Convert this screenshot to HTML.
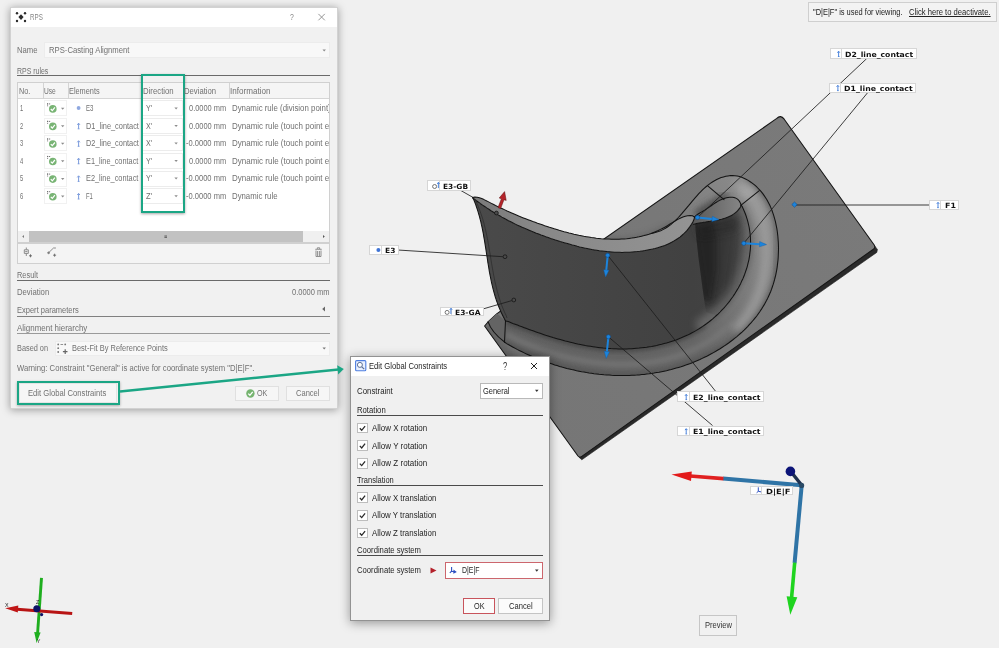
<!DOCTYPE html><html><head><meta charset="utf-8"><title>RPS</title><style>html,body{margin:0;padding:0;}body{width:999px;height:648px;position:relative;overflow:hidden;background:#f0f0f0;font-family:'Liberation Sans', sans-serif;}svg{position:absolute;left:0;top:0;}</style></head><body>
<svg width="999" height="648" viewBox="0 0 999 648">
<defs>
<linearGradient id="gwall" gradientUnits="userSpaceOnUse" x1="472" y1="0" x2="754" y2="0">
<stop offset="0" stop-color="#4a4a4a"/><stop offset="0.5" stop-color="#444"/><stop offset="0.78" stop-color="#414141"/><stop offset="0.9" stop-color="#434343"/><stop offset="1" stop-color="#505050"/>
</linearGradient>
<linearGradient id="gring" gradientUnits="userSpaceOnUse" x1="560" y1="390" x2="770" y2="190">
<stop offset="0" stop-color="#626262"/><stop offset="0.45" stop-color="#666"/><stop offset="0.7" stop-color="#7c7c7c"/><stop offset="1" stop-color="#8c8c8c"/>
</linearGradient>
<linearGradient id="gplate" gradientUnits="userSpaceOnUse" x1="500" y1="400" x2="860" y2="180">
<stop offset="0" stop-color="#767676"/><stop offset="0.3" stop-color="#777"/><stop offset="1" stop-color="#7a7a7a"/>
</linearGradient>
<linearGradient id="grim" gradientUnits="userSpaceOnUse" x1="472" y1="0" x2="695" y2="0">
<stop offset="0" stop-color="#7a7a7a"/><stop offset="0.3" stop-color="#888"/><stop offset="1" stop-color="#939393"/>
</linearGradient>
<linearGradient id="gtongue" gradientUnits="userSpaceOnUse" x1="694" y1="0" x2="741" y2="0">
<stop offset="0" stop-color="#5a5a5a"/><stop offset="1" stop-color="#858585"/>
</linearGradient>
<filter id="b2" x="-20%" y="-20%" width="140%" height="140%"><feGaussianBlur stdDeviation="2.2"/></filter>
<filter id="b3" x="-20%" y="-20%" width="140%" height="140%"><feGaussianBlur stdDeviation="3"/></filter>
<filter id="b4" x="-20%" y="-20%" width="140%" height="140%"><feGaussianBlur stdDeviation="4.5"/></filter>
<filter id="b8" x="-30%" y="-30%" width="160%" height="160%"><feGaussianBlur stdDeviation="8"/></filter>
<clipPath id="cring"><path d="M504.5 342.0 L506.6 343.6 L508.7 344.8 L510.9 346.0 L513.1 347.2 L515.3 348.4 L517.5 349.6 L519.7 350.7 L522.0 351.8 L524.2 352.9 L526.5 354.0 L528.8 355.0 L531.1 356.0 L533.4 357.0 L535.7 358.0 L538.0 358.9 L540.4 359.9 L542.7 360.8 L545.1 361.6 L547.5 362.5 L549.9 363.3 L552.3 364.1 L554.7 364.9 L557.1 365.6 L559.5 366.4 L561.9 367.1 L564.3 367.7 L566.8 368.4 L569.2 369.0 L571.7 369.6 L574.1 370.1 L576.6 370.7 L579.1 371.2 L581.6 371.7 L584.0 372.1 L586.5 372.6 L589.0 373.0 L591.5 373.3 L594.0 373.7 L596.5 374.0 L599.0 374.3 L601.5 374.5 L604.0 374.8 L606.6 375.0 L609.1 375.1 L611.6 375.3 L614.1 375.4 L616.6 375.5 L619.1 375.5 L621.6 375.6 L624.1 375.5 L626.7 375.5 L629.2 375.4 L631.7 375.3 L634.2 375.2 L636.7 375.1 L639.2 374.9 L641.7 374.6 L644.2 374.4 L646.7 374.1 L649.2 373.8 L651.7 373.4 L654.1 373.1 L656.6 372.6 L659.1 372.2 L661.6 371.7 L664.0 371.2 L666.5 370.7 L668.9 370.1 L671.3 369.5 L673.8 368.8 L676.2 368.1 L678.6 367.4 L681.0 366.7 L683.4 365.9 L685.8 365.1 L688.2 364.2 L690.5 363.4 L692.9 362.4 L695.2 361.5 L697.6 360.5 L699.9 359.5 L702.2 358.4 L704.5 357.3 L706.8 356.2 L709.1 355.0 L711.3 353.8 L713.5 352.6 L715.8 351.3 L717.9 350.0 L720.1 348.7 L722.3 347.3 L724.4 345.9 L726.5 344.5 L728.6 343.0 L730.6 341.5 L732.6 340.0 L734.6 338.4 L736.6 336.8 L738.5 335.2 L740.4 333.5 L742.3 331.8 L744.1 330.1 L745.9 328.3 L747.6 326.6 L749.3 324.7 L751.0 322.9 L752.6 321.0 L754.2 319.1 L755.8 317.2 L757.3 315.2 L758.7 313.2 L760.1 311.2 L761.5 309.1 L762.8 307.0 L764.1 304.9 L765.3 302.8 L766.5 300.6 L767.6 298.4 L768.6 296.2 L769.6 294.0 L770.6 291.7 L771.5 289.4 L772.3 287.0 L773.1 284.7 L773.8 282.3 L774.5 279.9 L775.1 277.5 L775.7 275.1 L776.2 272.6 L776.7 270.1 L777.1 267.6 L777.4 265.1 L777.7 262.6 L778.0 260.1 L778.2 257.5 L778.3 255.0 L778.4 252.4 L778.5 249.8 L778.5 247.2 L778.4 244.6 L778.3 242.0 L778.1 239.4 L777.9 236.7 L777.6 234.1 L777.3 231.5 L776.9 228.9 L776.4 226.3 L775.9 223.8 L775.3 221.2 L774.6 218.7 L773.9 216.2 L773.1 213.7 L772.3 211.3 L771.4 208.9 L770.4 206.6 L769.3 204.3 L768.1 202.0 L766.9 199.8 L765.6 197.7 L764.2 195.6 L762.8 193.6 L761.2 191.6 L759.6 189.8 L757.8 188.0 L756.0 186.2 L754.2 184.6 L752.2 183.1 L750.2 181.7 L748.2 180.4 L746.0 179.2 L743.9 178.2 L741.7 177.3 L739.5 176.6 L737.2 176.1 L734.9 175.8 L732.6 175.6 L730.3 175.6 L728.0 175.9 L725.8 176.3 L723.5 176.9 L721.2 177.6 L718.9 178.5 L716.7 179.5 L714.5 180.7 L712.4 182.0 L710.3 183.4 L708.3 184.9 L706.3 186.5 L704.4 188.2 L702.5 189.9 L700.6 191.8 L698.8 193.7 L697.1 195.6 L695.3 197.6 L693.6 199.6 L691.9 201.6 L690.3 203.6 L688.6 205.7 L686.9 207.7 L685.2 209.7 L683.5 211.7 L681.8 213.7 L680.1 215.6 L678.4 217.5 L676.6 219.3 L674.8 221.1 L672.9 222.7 L671.1 224.3 L669.1 225.8 L667.1 227.2 L665.0 228.5 L662.9 229.6 L660.7 230.7 L658.4 231.6 L656.1 232.3 L653.6 232.9 L651.0 233.5 L651.3 233.4 L653.6 232.5 L656.0 231.5 L658.3 230.5 L660.6 229.4 L662.9 228.2 L665.2 227.0 L667.4 225.7 L669.6 224.3 L671.8 222.9 L674.0 221.6 L676.2 220.3 L678.4 219.1 L680.7 218.0 L682.9 217.1 L685.3 216.3 L687.6 215.8 L690.1 215.6 L692.5 215.8 L694.5 217.1 L694.5 217.1 L695.6 215.9 L696.8 214.9 L698.1 214.0 L699.4 213.2 L700.7 212.4 L702.1 211.7 L703.4 210.9 L704.7 210.1 L706.0 209.2 L707.3 208.4 L708.6 207.5 L709.9 206.6 L711.2 205.7 L712.5 204.8 L713.8 203.9 L715.1 203.0 L716.4 202.2 L717.8 201.4 L719.1 200.6 L720.5 199.9 L722.0 199.3 L723.4 198.7 L724.9 198.2 L726.5 197.7 L728.0 197.4 L729.6 197.2 L731.1 197.2 L732.6 197.3 L734.0 197.5 L735.4 197.9 L736.7 198.6 L737.8 199.4 L738.9 200.5 L739.8 201.9 L740.6 203.5 L741.1 205.2 L741.1 205.2 L742.3 206.7 L743.4 209.2 L744.5 211.7 L745.5 214.3 L746.4 216.8 L747.2 219.3 L747.9 221.9 L748.5 224.5 L749.1 227.0 L749.5 229.6 L749.9 232.1 L750.2 234.7 L750.4 237.2 L750.5 239.7 L750.6 242.3 L750.6 244.8 L750.5 247.3 L750.3 249.8 L750.0 252.3 L749.7 254.8 L749.3 257.3 L748.9 259.8 L748.3 262.2 L747.7 264.6 L747.1 267.1 L746.3 269.5 L745.5 271.8 L744.7 274.2 L743.8 276.5 L742.8 278.9 L741.7 281.1 L740.7 283.4 L739.5 285.7 L738.3 287.9 L737.0 290.1 L735.7 292.2 L734.4 294.4 L733.0 296.5 L731.5 298.5 L730.0 300.6 L728.5 302.6 L726.9 304.5 L725.2 306.5 L723.6 308.4 L721.8 310.2 L720.1 312.0 L718.3 313.8 L716.4 315.5 L714.6 317.2 L712.7 318.9 L710.7 320.5 L708.8 322.0 L706.8 323.5 L704.7 325.0 L702.7 326.4 L700.6 327.8 L698.5 329.1 L696.4 330.4 L694.2 331.6 L692.0 332.8 L689.8 334.0 L687.6 335.1 L685.3 336.1 L683.0 337.1 L680.7 338.1 L678.4 339.0 L676.1 339.9 L673.7 340.7 L671.3 341.5 L668.9 342.3 L666.5 343.0 L664.1 343.6 L661.6 344.3 L659.2 344.8 L656.7 345.4 L654.2 345.9 L651.7 346.4 L649.2 346.8 L646.7 347.2 L644.2 347.5 L641.7 347.8 L639.1 348.1 L636.6 348.3 L634.0 348.5 L631.5 348.7 L628.9 348.8 L626.4 348.9 L623.8 348.9 L621.2 348.9 L618.6 348.9 L616.1 348.8 L613.5 348.7 L610.9 348.6 L608.3 348.4 L605.8 348.2 L603.2 348.0 L600.6 347.7 L598.1 347.4 L595.5 347.1 L593.0 346.7 L590.4 346.3 L587.9 345.9 L585.4 345.5 L582.8 345.0 L580.3 344.5 L577.8 344.0 L575.3 343.4 L572.8 342.8 L570.3 342.2 L567.8 341.6 L565.3 341.0 L562.8 340.3 L560.3 339.6 L557.9 338.9 L555.4 338.2 L553.0 337.5 L550.5 336.7 L548.1 335.9 L545.7 335.2 L543.3 334.4 L540.9 333.6 L538.5 332.8 L536.1 331.9 L533.7 331.1 L531.4 330.3 L529.0 329.4 L526.7 328.6 L524.3 327.7 L522.0 326.8 L519.7 326.0 L517.4 325.1 L515.1 324.2 L512.8 323.4 L510.6 322.5 L508.3 321.6 L505.5 321.0 Z"/></clipPath>
<clipPath id="cwall"><path d="M472.5 197.5 L472.5 197.5 L474.4 199.2 L476.4 200.7 L478.5 202.2 L480.5 203.7 L482.6 205.1 L484.7 206.5 L486.7 207.9 L488.9 209.3 L491.0 210.7 L493.1 212.0 L495.3 213.3 L497.5 214.6 L499.7 215.8 L501.9 217.1 L504.1 218.3 L506.3 219.5 L508.5 220.7 L510.8 221.8 L513.1 223.0 L515.3 224.1 L517.6 225.2 L519.9 226.2 L522.2 227.3 L524.6 228.3 L526.9 229.3 L529.2 230.3 L531.6 231.3 L533.9 232.2 L536.3 233.2 L538.7 234.1 L541.0 235.0 L543.4 235.8 L545.8 236.7 L548.2 237.5 L550.6 238.4 L553.0 239.2 L555.4 240.0 L557.8 240.7 L560.2 241.5 L562.6 242.2 L565.1 242.9 L567.5 243.6 L569.9 244.3 L572.3 245.0 L574.7 245.6 L577.2 246.3 L579.6 246.9 L582.1 247.4 L584.5 248.0 L587.0 248.5 L589.4 249.0 L591.9 249.5 L594.3 249.9 L596.8 250.3 L599.3 250.7 L601.8 251.0 L604.3 251.3 L606.8 251.6 L609.3 251.8 L611.9 252.0 L614.4 252.2 L616.9 252.3 L619.5 252.3 L622.0 252.4 L624.6 252.3 L627.2 252.3 L629.7 252.2 L632.3 252.0 L634.8 251.8 L637.4 251.6 L639.9 251.3 L642.5 250.9 L645.0 250.6 L647.6 250.1 L650.1 249.6 L652.6 249.1 L655.1 248.5 L657.6 247.8 L660.0 247.0 L662.4 246.2 L664.8 245.4 L667.1 244.4 L669.3 243.4 L671.6 242.3 L673.7 241.1 L675.9 239.8 L677.9 238.5 L679.9 237.1 L681.8 235.5 L683.6 233.9 L685.4 232.2 L687.1 230.3 L688.6 228.4 L690.1 226.4 L691.5 224.2 L692.8 222.0 L694.0 219.6 L694.5 217.1 L693.5 224.3 L695.0 223.9 L696.4 223.6 L697.9 223.3 L699.4 223.0 L700.9 222.7 L702.4 222.5 L704.0 222.2 L705.6 222.0 L707.2 221.7 L708.8 221.5 L710.4 221.3 L712.1 221.0 L713.7 220.8 L715.3 220.5 L716.9 220.2 L718.5 219.9 L720.1 219.5 L721.6 219.2 L723.2 218.7 L724.7 218.3 L726.2 217.8 L727.6 217.2 L729.1 216.6 L730.4 216.0 L731.8 215.2 L733.1 214.4 L734.3 213.6 L735.5 212.7 L736.7 211.6 L737.7 210.6 L738.7 209.4 L739.7 208.1 L740.6 206.7 L741.1 205.2 L741.1 205.2 L742.3 206.7 L743.4 209.2 L744.5 211.7 L745.5 214.3 L746.4 216.8 L747.2 219.3 L747.9 221.9 L748.5 224.5 L749.1 227.0 L749.5 229.6 L749.9 232.1 L750.2 234.7 L750.4 237.2 L750.5 239.7 L750.6 242.3 L750.6 244.8 L750.5 247.3 L750.3 249.8 L750.0 252.3 L749.7 254.8 L749.3 257.3 L748.9 259.8 L748.3 262.2 L747.7 264.6 L747.1 267.1 L746.3 269.5 L745.5 271.8 L744.7 274.2 L743.8 276.5 L742.8 278.9 L741.7 281.1 L740.7 283.4 L739.5 285.7 L738.3 287.9 L737.0 290.1 L735.7 292.2 L734.4 294.4 L733.0 296.5 L731.5 298.5 L730.0 300.6 L728.5 302.6 L726.9 304.5 L725.2 306.5 L723.6 308.4 L721.8 310.2 L720.1 312.0 L718.3 313.8 L716.4 315.5 L714.6 317.2 L712.7 318.9 L710.7 320.5 L708.8 322.0 L706.8 323.5 L704.7 325.0 L702.7 326.4 L700.6 327.8 L698.5 329.1 L696.4 330.4 L694.2 331.6 L692.0 332.8 L689.8 334.0 L687.6 335.1 L685.3 336.1 L683.0 337.1 L680.7 338.1 L678.4 339.0 L676.1 339.9 L673.7 340.7 L671.3 341.5 L668.9 342.3 L666.5 343.0 L664.1 343.6 L661.6 344.3 L659.2 344.8 L656.7 345.4 L654.2 345.9 L651.7 346.4 L649.2 346.8 L646.7 347.2 L644.2 347.5 L641.7 347.8 L639.1 348.1 L636.6 348.3 L634.0 348.5 L631.5 348.7 L628.9 348.8 L626.4 348.9 L623.8 348.9 L621.2 348.9 L618.6 348.9 L616.1 348.8 L613.5 348.7 L610.9 348.6 L608.3 348.4 L605.8 348.2 L603.2 348.0 L600.6 347.7 L598.1 347.4 L595.5 347.1 L593.0 346.7 L590.4 346.3 L587.9 345.9 L585.4 345.5 L582.8 345.0 L580.3 344.5 L577.8 344.0 L575.3 343.4 L572.8 342.8 L570.3 342.2 L567.8 341.6 L565.3 341.0 L562.8 340.3 L560.3 339.6 L557.9 338.9 L555.4 338.2 L553.0 337.5 L550.5 336.7 L548.1 335.9 L545.7 335.2 L543.3 334.4 L540.9 333.6 L538.5 332.8 L536.1 331.9 L533.7 331.1 L531.4 330.3 L529.0 329.4 L526.7 328.6 L524.3 327.7 L522.0 326.8 L519.7 326.0 L517.4 325.1 L515.1 324.2 L512.8 323.4 L510.6 322.5 L508.3 321.6 L505.5 321.0 L505.5 321.0 L504.4 318.7 L503.2 316.4 L502.0 314.1 L500.9 311.7 L499.9 309.4 L498.9 307.0 L497.9 304.6 L497.1 302.2 L496.2 299.7 L495.4 297.3 L494.7 294.9 L494.0 292.4 L493.3 289.9 L492.7 287.5 L492.1 285.0 L491.5 282.5 L491.0 280.0 L490.5 277.4 L490.0 274.9 L489.5 272.4 L489.1 269.8 L488.7 267.3 L488.3 264.8 L487.8 262.2 L487.5 259.7 L487.1 257.1 L486.7 254.6 L486.3 252.0 L485.9 249.5 L485.5 246.9 L485.1 244.4 L484.7 241.8 L484.3 239.3 L483.8 236.8 L483.4 234.2 L482.9 231.7 L482.4 229.2 L481.9 226.7 L481.3 224.2 L480.8 221.7 L480.1 219.2 L479.5 216.7 L478.8 214.3 L478.1 211.8 L477.3 209.4 L476.5 207.0 L475.7 204.5 L474.8 202.2 L473.8 199.8 L472.5 197.5 Z"/></clipPath>
<clipPath id="ccrease"><path d="M694.5 215 Q696 240 699.5 265 Q702 285 706 312 L760 330 L760 200 Z"/></clipPath>
<clipPath id="cplate"><path d="M776.8 118.4 Q780.6 114.4 784.2 119.2 L874.2 245 Q875.8 247.6 873.4 249.2 L581.5 456.6 Q579.6 458 578 456 L484.6 326 L488 322 L497 313.6 Z"/></clipPath>
</defs>
<path d="M874 245 L877.4 249.4 L876.8 252.4 L581.8 459.8 L579 457.2 Z" fill="#2a2a2a" stroke="#1f1f1f" stroke-width="0.6" stroke-linejoin="round"/>
<path d="M776.8 118.4 Q780.6 114.4 784.2 119.2 L874.2 245 Q875.8 247.6 873.4 249.2 L581.5 456.6 Q579.6 458 578 456 L484.6 326 L488 322 L497 313.6 Z" fill="url(#gplate)"/>
<g clip-path="url(#cplate)">
<path d="M485 326 L522 377" stroke="#4e4e4e" stroke-width="14" opacity="0.5" filter="url(#b4)"/>
<path d="M607.0 242.0 L622.0 242.5 L637.0 241.0 L651.0 237.0 L665.0 230.5 L676.0 224.0" fill="none" stroke="#555" stroke-width="9" opacity="0.5" filter="url(#b3)"/>
</g>
<path d="M776.8 118.4 Q780.6 114.4 784.2 119.2 L874.2 245 Q875.8 247.6 873.4 249.2 L581.5 456.6 Q579.6 458 578 456 L484.6 326 L488 322 L497 313.6 Z" fill="none" stroke="#161616" stroke-width="1.1" stroke-linejoin="round"/>
<path d="M488.1 321.8 Q491.5 332 504.5 342 L505.5 321 L497 313.6 Z" fill="#646464"/>
<path d="M504.5 342.0 L506.6 343.6 L508.7 344.8 L510.9 346.0 L513.1 347.2 L515.3 348.4 L517.5 349.6 L519.7 350.7 L522.0 351.8 L524.2 352.9 L526.5 354.0 L528.8 355.0 L531.1 356.0 L533.4 357.0 L535.7 358.0 L538.0 358.9 L540.4 359.9 L542.7 360.8 L545.1 361.6 L547.5 362.5 L549.9 363.3 L552.3 364.1 L554.7 364.9 L557.1 365.6 L559.5 366.4 L561.9 367.1 L564.3 367.7 L566.8 368.4 L569.2 369.0 L571.7 369.6 L574.1 370.1 L576.6 370.7 L579.1 371.2 L581.6 371.7 L584.0 372.1 L586.5 372.6 L589.0 373.0 L591.5 373.3 L594.0 373.7 L596.5 374.0 L599.0 374.3 L601.5 374.5 L604.0 374.8 L606.6 375.0 L609.1 375.1 L611.6 375.3 L614.1 375.4 L616.6 375.5 L619.1 375.5 L621.6 375.6 L624.1 375.5 L626.7 375.5 L629.2 375.4 L631.7 375.3 L634.2 375.2 L636.7 375.1 L639.2 374.9 L641.7 374.6 L644.2 374.4 L646.7 374.1 L649.2 373.8 L651.7 373.4 L654.1 373.1 L656.6 372.6 L659.1 372.2 L661.6 371.7 L664.0 371.2 L666.5 370.7 L668.9 370.1 L671.3 369.5 L673.8 368.8 L676.2 368.1 L678.6 367.4 L681.0 366.7 L683.4 365.9 L685.8 365.1 L688.2 364.2 L690.5 363.4 L692.9 362.4 L695.2 361.5 L697.6 360.5 L699.9 359.5 L702.2 358.4 L704.5 357.3 L706.8 356.2 L709.1 355.0 L711.3 353.8 L713.5 352.6 L715.8 351.3 L717.9 350.0 L720.1 348.7 L722.3 347.3 L724.4 345.9 L726.5 344.5 L728.6 343.0 L730.6 341.5 L732.6 340.0 L734.6 338.4 L736.6 336.8 L738.5 335.2 L740.4 333.5 L742.3 331.8 L744.1 330.1 L745.9 328.3 L747.6 326.6 L749.3 324.7 L751.0 322.9 L752.6 321.0 L754.2 319.1 L755.8 317.2 L757.3 315.2 L758.7 313.2 L760.1 311.2 L761.5 309.1 L762.8 307.0 L764.1 304.9 L765.3 302.8 L766.5 300.6 L767.6 298.4 L768.6 296.2 L769.6 294.0 L770.6 291.7 L771.5 289.4 L772.3 287.0 L773.1 284.7 L773.8 282.3 L774.5 279.9 L775.1 277.5 L775.7 275.1 L776.2 272.6 L776.7 270.1 L777.1 267.6 L777.4 265.1 L777.7 262.6 L778.0 260.1 L778.2 257.5 L778.3 255.0 L778.4 252.4 L778.5 249.8 L778.5 247.2 L778.4 244.6 L778.3 242.0 L778.1 239.4 L777.9 236.7 L777.6 234.1 L777.3 231.5 L776.9 228.9 L776.4 226.3 L775.9 223.8 L775.3 221.2 L774.6 218.7 L773.9 216.2 L773.1 213.7 L772.3 211.3 L771.4 208.9 L770.4 206.6 L769.3 204.3 L768.1 202.0 L766.9 199.8 L765.6 197.7 L764.2 195.6 L762.8 193.6 L761.2 191.6 L759.6 189.8 L757.8 188.0 L756.0 186.2 L754.2 184.6 L752.2 183.1 L750.2 181.7 L748.2 180.4 L746.0 179.2 L743.9 178.2 L741.7 177.3 L739.5 176.6 L737.2 176.1 L734.9 175.8 L732.6 175.6 L730.3 175.6 L728.0 175.9 L725.8 176.3 L723.5 176.9 L721.2 177.6 L718.9 178.5 L716.7 179.5 L714.5 180.7 L712.4 182.0 L710.3 183.4 L708.3 184.9 L706.3 186.5 L704.4 188.2 L702.5 189.9 L700.6 191.8 L698.8 193.7 L697.1 195.6 L695.3 197.6 L693.6 199.6 L691.9 201.6 L690.3 203.6 L688.6 205.7 L686.9 207.7 L685.2 209.7 L683.5 211.7 L681.8 213.7 L680.1 215.6 L678.4 217.5 L676.6 219.3 L674.8 221.1 L672.9 222.7 L671.1 224.3 L669.1 225.8 L667.1 227.2 L665.0 228.5 L662.9 229.6 L660.7 230.7 L658.4 231.6 L656.1 232.3 L653.6 232.9 L651.0 233.5 L651.3 233.4 L653.6 232.5 L656.0 231.5 L658.3 230.5 L660.6 229.4 L662.9 228.2 L665.2 227.0 L667.4 225.7 L669.6 224.3 L671.8 222.9 L674.0 221.6 L676.2 220.3 L678.4 219.1 L680.7 218.0 L682.9 217.1 L685.3 216.3 L687.6 215.8 L690.1 215.6 L692.5 215.8 L694.5 217.1 L694.5 217.1 L695.6 215.9 L696.8 214.9 L698.1 214.0 L699.4 213.2 L700.7 212.4 L702.1 211.7 L703.4 210.9 L704.7 210.1 L706.0 209.2 L707.3 208.4 L708.6 207.5 L709.9 206.6 L711.2 205.7 L712.5 204.8 L713.8 203.9 L715.1 203.0 L716.4 202.2 L717.8 201.4 L719.1 200.6 L720.5 199.9 L722.0 199.3 L723.4 198.7 L724.9 198.2 L726.5 197.7 L728.0 197.4 L729.6 197.2 L731.1 197.2 L732.6 197.3 L734.0 197.5 L735.4 197.9 L736.7 198.6 L737.8 199.4 L738.9 200.5 L739.8 201.9 L740.6 203.5 L741.1 205.2 L741.1 205.2 L742.3 206.7 L743.4 209.2 L744.5 211.7 L745.5 214.3 L746.4 216.8 L747.2 219.3 L747.9 221.9 L748.5 224.5 L749.1 227.0 L749.5 229.6 L749.9 232.1 L750.2 234.7 L750.4 237.2 L750.5 239.7 L750.6 242.3 L750.6 244.8 L750.5 247.3 L750.3 249.8 L750.0 252.3 L749.7 254.8 L749.3 257.3 L748.9 259.8 L748.3 262.2 L747.7 264.6 L747.1 267.1 L746.3 269.5 L745.5 271.8 L744.7 274.2 L743.8 276.5 L742.8 278.9 L741.7 281.1 L740.7 283.4 L739.5 285.7 L738.3 287.9 L737.0 290.1 L735.7 292.2 L734.4 294.4 L733.0 296.5 L731.5 298.5 L730.0 300.6 L728.5 302.6 L726.9 304.5 L725.2 306.5 L723.6 308.4 L721.8 310.2 L720.1 312.0 L718.3 313.8 L716.4 315.5 L714.6 317.2 L712.7 318.9 L710.7 320.5 L708.8 322.0 L706.8 323.5 L704.7 325.0 L702.7 326.4 L700.6 327.8 L698.5 329.1 L696.4 330.4 L694.2 331.6 L692.0 332.8 L689.8 334.0 L687.6 335.1 L685.3 336.1 L683.0 337.1 L680.7 338.1 L678.4 339.0 L676.1 339.9 L673.7 340.7 L671.3 341.5 L668.9 342.3 L666.5 343.0 L664.1 343.6 L661.6 344.3 L659.2 344.8 L656.7 345.4 L654.2 345.9 L651.7 346.4 L649.2 346.8 L646.7 347.2 L644.2 347.5 L641.7 347.8 L639.1 348.1 L636.6 348.3 L634.0 348.5 L631.5 348.7 L628.9 348.8 L626.4 348.9 L623.8 348.9 L621.2 348.9 L618.6 348.9 L616.1 348.8 L613.5 348.7 L610.9 348.6 L608.3 348.4 L605.8 348.2 L603.2 348.0 L600.6 347.7 L598.1 347.4 L595.5 347.1 L593.0 346.7 L590.4 346.3 L587.9 345.9 L585.4 345.5 L582.8 345.0 L580.3 344.5 L577.8 344.0 L575.3 343.4 L572.8 342.8 L570.3 342.2 L567.8 341.6 L565.3 341.0 L562.8 340.3 L560.3 339.6 L557.9 338.9 L555.4 338.2 L553.0 337.5 L550.5 336.7 L548.1 335.9 L545.7 335.2 L543.3 334.4 L540.9 333.6 L538.5 332.8 L536.1 331.9 L533.7 331.1 L531.4 330.3 L529.0 329.4 L526.7 328.6 L524.3 327.7 L522.0 326.8 L519.7 326.0 L517.4 325.1 L515.1 324.2 L512.8 323.4 L510.6 322.5 L508.3 321.6 L505.5 321.0 Z" fill="url(#gring)"/>
<g clip-path="url(#cring)">
<path d="M505.5 321.0 L508.3 321.6 L510.6 322.5 L512.8 323.4 L515.1 324.2 L517.4 325.1 L519.7 326.0 L522.0 326.8 L524.3 327.7 L526.7 328.6 L529.0 329.4 L531.4 330.3 L533.7 331.1 L536.1 331.9 L538.5 332.8 L540.9 333.6 L543.3 334.4 L545.7 335.2 L548.1 335.9 L550.5 336.7 L553.0 337.5 L555.4 338.2 L557.9 338.9 L560.3 339.6 L562.8 340.3 L565.3 341.0 L567.8 341.6 L570.3 342.2 L572.8 342.8 L575.3 343.4 L577.8 344.0 L580.3 344.5 L582.8 345.0 L585.4 345.5 L587.9 345.9 L590.4 346.3 L593.0 346.7 L595.5 347.1 L598.1 347.4 L600.6 347.7 L603.2 348.0 L605.8 348.2 L608.3 348.4 L610.9 348.6 L613.5 348.7 L616.1 348.8 L618.6 348.9 L621.2 348.9 L623.8 348.9 L626.4 348.9 L628.9 348.8 L631.5 348.7 L634.0 348.5 L636.6 348.3 L639.1 348.1 L641.7 347.8 L644.2 347.5 L646.7 347.2 L649.2 346.8 L651.7 346.4 L654.2 345.9 L656.7 345.4 L659.2 344.8 L661.6 344.3 L664.1 343.6 L666.5 343.0 L668.9 342.3 L671.3 341.5 L673.7 340.7 L676.1 339.9 L678.4 339.0 L680.7 338.1 L683.0 337.1 L685.3 336.1 L687.6 335.1 L689.8 334.0 L692.0 332.8 L694.2 331.6 L696.4 330.4 L698.5 329.1 L700.6 327.8 L702.7 326.4 L704.7 325.0" fill="none" stroke="#3c3c3c" stroke-width="6" opacity="0.7" filter="url(#b2)"/>
<path d="M704.7 325.0 L706.8 323.5 L708.8 322.0 L710.7 320.5 L712.7 318.9 L714.6 317.2 L716.4 315.5 L718.3 313.8 L720.1 312.0 L721.8 310.2 L723.6 308.4 L725.2 306.5 L726.9 304.5 L728.5 302.6 L730.0 300.6 L731.5 298.5 L733.0 296.5 L734.4 294.4 L735.7 292.2 L737.0 290.1 L738.3 287.9 L739.5 285.7 L740.7 283.4 L741.7 281.1 L742.8 278.9 L743.8 276.5 L744.7 274.2 L745.5 271.8 L746.3 269.5 L747.1 267.1 L747.7 264.6 L748.3 262.2 L748.9 259.8 L749.3 257.3 L749.7 254.8 L750.0 252.3 L750.3 249.8 L750.5 247.3 L750.6 244.8 L750.6 242.3 L750.5 239.7 L750.4 237.2 L750.2 234.7 L749.9 232.1 L749.5 229.6 L749.1 227.0 L748.5 224.5 L747.9 221.9 L747.2 219.3 L746.4 216.8 L745.5 214.3 L744.5 211.7 L743.4 209.2 L742.3 206.7 L741.1 205.2" fill="none" stroke="#4a4a4a" stroke-width="5" opacity="0.4" filter="url(#b2)"/>
<path d="M504.5 342.0 L506.6 343.6 L508.7 344.8 L510.9 346.0 L513.1 347.2 L515.3 348.4 L517.5 349.6 L519.7 350.7 L522.0 351.8 L524.2 352.9 L526.5 354.0 L528.8 355.0 L531.1 356.0 L533.4 357.0 L535.7 358.0 L538.0 358.9 L540.4 359.9 L542.7 360.8 L545.1 361.6 L547.5 362.5 L549.9 363.3 L552.3 364.1 L554.7 364.9 L557.1 365.6 L559.5 366.4 L561.9 367.1 L564.3 367.7 L566.8 368.4 L569.2 369.0 L571.7 369.6 L574.1 370.1 L576.6 370.7 L579.1 371.2 L581.6 371.7 L584.0 372.1 L586.5 372.6 L589.0 373.0 L591.5 373.3 L594.0 373.7 L596.5 374.0 L599.0 374.3 L601.5 374.5 L604.0 374.8 L606.6 375.0 L609.1 375.1 L611.6 375.3 L614.1 375.4 L616.6 375.5 L619.1 375.5 L621.6 375.6 L624.1 375.5 L626.7 375.5 L629.2 375.4 L631.7 375.3 L634.2 375.2 L636.7 375.1 L639.2 374.9 L641.7 374.6 L644.2 374.4 L646.7 374.1 L649.2 373.8 L651.7 373.4 L654.1 373.1 L656.6 372.6 L659.1 372.2 L661.6 371.7 L664.0 371.2 L666.5 370.7 L668.9 370.1 L671.3 369.5 L673.8 368.8 L676.2 368.1 L678.6 367.4 L681.0 366.7 L683.4 365.9 L685.8 365.1 L688.2 364.2 L690.5 363.4 L692.9 362.4 L695.2 361.5 L697.6 360.5 L699.9 359.5 L702.2 358.4 L704.5 357.3 L706.8 356.2 L709.1 355.0 L711.3 353.8 L713.5 352.6 L715.8 351.3 L717.9 350.0 L720.1 348.7 L722.3 347.3 L724.4 345.9 L726.5 344.5 L728.6 343.0 L730.6 341.5 L732.6 340.0 L734.6 338.4 L736.6 336.8 L738.5 335.2 L740.4 333.5 L742.3 331.8 L744.1 330.1 L745.9 328.3 L747.6 326.6 L749.3 324.7 L751.0 322.9 L752.6 321.0 L754.2 319.1 L755.8 317.2 L757.3 315.2 L758.7 313.2 L760.1 311.2 L761.5 309.1 L762.8 307.0 L764.1 304.9 L765.3 302.8 L766.5 300.6 L767.6 298.4 L768.6 296.2 L769.6 294.0 L770.6 291.7 L771.5 289.4 L772.3 287.0 L773.1 284.7 L773.8 282.3 L774.5 279.9 L775.1 277.5 L775.7 275.1 L776.2 272.6 L776.7 270.1 L777.1 267.6 L777.4 265.1 L777.7 262.6 L778.0 260.1 L778.2 257.5 L778.3 255.0 L778.4 252.4 L778.5 249.8 L778.5 247.2 L778.4 244.6 L778.3 242.0 L778.1 239.4 L777.9 236.7 L777.6 234.1 L777.3 231.5 L776.9 228.9 L776.4 226.3 L775.9 223.8 L775.3 221.2 L774.6 218.7 L773.9 216.2 L773.1 213.7 L772.3 211.3 L771.4 208.9 L770.4 206.6 L769.3 204.3 L768.1 202.0 L766.9 199.8 L765.6 197.7 L764.2 195.6 L762.8 193.6 L761.2 191.6 L759.6 189.8 L757.8 188.0 L756.0 186.2 L754.2 184.6 L752.2 183.1 L750.2 181.7 L748.2 180.4" fill="none" stroke="#484848" stroke-width="5" opacity="0.55" filter="url(#b2)"/>
<path d="M506.0 334.0 L508.3 335.4 L510.5 336.5 L512.7 337.6 L514.9 338.6 L517.2 339.7 L519.4 340.7 L521.7 341.7 L524.0 342.7 L526.3 343.7 L528.6 344.7 L530.9 345.6 L533.3 346.5 L535.6 347.5 L538.0 348.3 L540.4 349.2 L542.8 350.0 L545.2 350.9 L547.6 351.7 L550.0 352.5 L552.4 353.2 L554.9 354.0 L557.3 354.7 L559.8 355.4 L562.2 356.0 L564.7 356.7 L567.2 357.3 L569.7 357.9 L572.2 358.5 L574.7 359.0 L577.2 359.5 L579.7 360.0 L582.2 360.5 L584.8 361.0 L587.3 361.4 L589.8 361.8 L592.3 362.1 L594.9 362.5 L597.4 362.8 L600.0 363.1 L602.5 363.3 L605.0 363.5 L607.6 363.7 L610.1 363.9 L612.7 364.0 L615.2 364.2 L617.7 364.2 L620.3 364.3 L622.8 364.3 L625.4 364.3 L627.9 364.2 L630.4 364.1 L632.9 364.0 L635.4 363.9 L638.0 363.7 L640.5 363.5 L643.0 363.2 L645.5 362.9 L647.9 362.6 L650.4 362.3 L652.9 361.9 L655.4 361.5 L657.8 361.0 L660.3 360.5 L662.7 360.0 L665.1 359.4 L667.6 358.8 L670.0 358.2 L672.4 357.5 L674.7 356.8 L677.1 356.0 L679.5 355.2 L681.8 354.4 L684.2 353.5 L686.5 352.6 L688.8 351.6 L691.1 350.6 L693.4 349.6 L695.6 348.5 L697.9 347.4 L700.1 346.2 L702.3 345.0 L704.5 343.8 L706.7 342.5 L708.8 341.2 L711.0 339.8 L713.1 338.4 L715.2 336.9 L717.3 335.4 L719.4 333.8 L721.4 332.2 L723.4 330.6 L725.4 328.9 L727.4 327.2 L729.4 325.4 L731.3 323.5 L733.0 322.0" fill="none" stroke="#7c7c7c" stroke-width="6" opacity="0.6" filter="url(#b2)"/>
<path d="M735.0 330.0 L736.9 328.2 L738.7 326.3 L740.5 324.3 L742.2 322.4 L743.8 320.3 L745.4 318.3 L746.9 316.2 L748.3 314.1 L749.7 312.0 L751.0 309.8 L752.3 307.7 L753.5 305.4 L754.7 303.2 L755.8 300.9 L756.8 298.6 L757.8 296.3 L758.7 294.0 L759.6 291.6 L760.4 289.2 L761.1 286.8 L761.8 284.4 L762.5 281.9 L763.0 279.5 L763.6 277.0 L764.1 274.5 L764.5 272.0 L764.9 269.4 L765.2 266.9 L765.5 264.4 L765.7 261.8 L765.9 259.2 L766.0 256.7 L766.1 254.1 L766.1 251.5 L766.1 248.9 L766.0 246.3 L765.9 243.7 L765.7 241.1 L765.5 238.5 L765.2 235.9 L764.9 233.3 L764.5 230.7 L764.1 228.1 L763.6 225.5 L763.1 223.0 L762.5 220.5 L761.8 218.0 L761.0 215.5 L760.2 213.1 L759.3 210.8 L758.3 208.5 L757.2 206.2 L756.1 204.0 L754.8 201.8 L753.5 199.8 L752.1 197.8 L750.5 195.8 L748.9 194.0 L747.2 192.3 L745.3 190.6 L743.3 189.1 L741.3 187.6 L739.1 186.3 L736.7 185.1 L734.0 184.5" fill="none" stroke="#a6a6a6" stroke-width="8" opacity="0.85" filter="url(#b4)"/>
<circle cx="747" cy="192" r="7" fill="#a8a8a8" opacity="0.7" filter="url(#b4)"/>
<path d="M728.0 196.5 L722.0 198.0 L713.0 204.0 L703.0 210.0 L696.0 215.0" fill="none" stroke="#3e3e3e" stroke-width="7" opacity="0.8" filter="url(#b3)"/>
</g>
<path d="M472.5 197.5 L472.5 197.5 L474.4 199.2 L476.4 200.7 L478.5 202.2 L480.5 203.7 L482.6 205.1 L484.7 206.5 L486.7 207.9 L488.9 209.3 L491.0 210.7 L493.1 212.0 L495.3 213.3 L497.5 214.6 L499.7 215.8 L501.9 217.1 L504.1 218.3 L506.3 219.5 L508.5 220.7 L510.8 221.8 L513.1 223.0 L515.3 224.1 L517.6 225.2 L519.9 226.2 L522.2 227.3 L524.6 228.3 L526.9 229.3 L529.2 230.3 L531.6 231.3 L533.9 232.2 L536.3 233.2 L538.7 234.1 L541.0 235.0 L543.4 235.8 L545.8 236.7 L548.2 237.5 L550.6 238.4 L553.0 239.2 L555.4 240.0 L557.8 240.7 L560.2 241.5 L562.6 242.2 L565.1 242.9 L567.5 243.6 L569.9 244.3 L572.3 245.0 L574.7 245.6 L577.2 246.3 L579.6 246.9 L582.1 247.4 L584.5 248.0 L587.0 248.5 L589.4 249.0 L591.9 249.5 L594.3 249.9 L596.8 250.3 L599.3 250.7 L601.8 251.0 L604.3 251.3 L606.8 251.6 L609.3 251.8 L611.9 252.0 L614.4 252.2 L616.9 252.3 L619.5 252.3 L622.0 252.4 L624.6 252.3 L627.2 252.3 L629.7 252.2 L632.3 252.0 L634.8 251.8 L637.4 251.6 L639.9 251.3 L642.5 250.9 L645.0 250.6 L647.6 250.1 L650.1 249.6 L652.6 249.1 L655.1 248.5 L657.6 247.8 L660.0 247.0 L662.4 246.2 L664.8 245.4 L667.1 244.4 L669.3 243.4 L671.6 242.3 L673.7 241.1 L675.9 239.8 L677.9 238.5 L679.9 237.1 L681.8 235.5 L683.6 233.9 L685.4 232.2 L687.1 230.3 L688.6 228.4 L690.1 226.4 L691.5 224.2 L692.8 222.0 L694.0 219.6 L694.5 217.1 L693.5 224.3 L695.0 223.9 L696.4 223.6 L697.9 223.3 L699.4 223.0 L700.9 222.7 L702.4 222.5 L704.0 222.2 L705.6 222.0 L707.2 221.7 L708.8 221.5 L710.4 221.3 L712.1 221.0 L713.7 220.8 L715.3 220.5 L716.9 220.2 L718.5 219.9 L720.1 219.5 L721.6 219.2 L723.2 218.7 L724.7 218.3 L726.2 217.8 L727.6 217.2 L729.1 216.6 L730.4 216.0 L731.8 215.2 L733.1 214.4 L734.3 213.6 L735.5 212.7 L736.7 211.6 L737.7 210.6 L738.7 209.4 L739.7 208.1 L740.6 206.7 L741.1 205.2 L741.1 205.2 L742.3 206.7 L743.4 209.2 L744.5 211.7 L745.5 214.3 L746.4 216.8 L747.2 219.3 L747.9 221.9 L748.5 224.5 L749.1 227.0 L749.5 229.6 L749.9 232.1 L750.2 234.7 L750.4 237.2 L750.5 239.7 L750.6 242.3 L750.6 244.8 L750.5 247.3 L750.3 249.8 L750.0 252.3 L749.7 254.8 L749.3 257.3 L748.9 259.8 L748.3 262.2 L747.7 264.6 L747.1 267.1 L746.3 269.5 L745.5 271.8 L744.7 274.2 L743.8 276.5 L742.8 278.9 L741.7 281.1 L740.7 283.4 L739.5 285.7 L738.3 287.9 L737.0 290.1 L735.7 292.2 L734.4 294.4 L733.0 296.5 L731.5 298.5 L730.0 300.6 L728.5 302.6 L726.9 304.5 L725.2 306.5 L723.6 308.4 L721.8 310.2 L720.1 312.0 L718.3 313.8 L716.4 315.5 L714.6 317.2 L712.7 318.9 L710.7 320.5 L708.8 322.0 L706.8 323.5 L704.7 325.0 L702.7 326.4 L700.6 327.8 L698.5 329.1 L696.4 330.4 L694.2 331.6 L692.0 332.8 L689.8 334.0 L687.6 335.1 L685.3 336.1 L683.0 337.1 L680.7 338.1 L678.4 339.0 L676.1 339.9 L673.7 340.7 L671.3 341.5 L668.9 342.3 L666.5 343.0 L664.1 343.6 L661.6 344.3 L659.2 344.8 L656.7 345.4 L654.2 345.9 L651.7 346.4 L649.2 346.8 L646.7 347.2 L644.2 347.5 L641.7 347.8 L639.1 348.1 L636.6 348.3 L634.0 348.5 L631.5 348.7 L628.9 348.8 L626.4 348.9 L623.8 348.9 L621.2 348.9 L618.6 348.9 L616.1 348.8 L613.5 348.7 L610.9 348.6 L608.3 348.4 L605.8 348.2 L603.2 348.0 L600.6 347.7 L598.1 347.4 L595.5 347.1 L593.0 346.7 L590.4 346.3 L587.9 345.9 L585.4 345.5 L582.8 345.0 L580.3 344.5 L577.8 344.0 L575.3 343.4 L572.8 342.8 L570.3 342.2 L567.8 341.6 L565.3 341.0 L562.8 340.3 L560.3 339.6 L557.9 338.9 L555.4 338.2 L553.0 337.5 L550.5 336.7 L548.1 335.9 L545.7 335.2 L543.3 334.4 L540.9 333.6 L538.5 332.8 L536.1 331.9 L533.7 331.1 L531.4 330.3 L529.0 329.4 L526.7 328.6 L524.3 327.7 L522.0 326.8 L519.7 326.0 L517.4 325.1 L515.1 324.2 L512.8 323.4 L510.6 322.5 L508.3 321.6 L505.5 321.0 L505.5 321.0 L504.4 318.7 L503.2 316.4 L502.0 314.1 L500.9 311.7 L499.9 309.4 L498.9 307.0 L497.9 304.6 L497.1 302.2 L496.2 299.7 L495.4 297.3 L494.7 294.9 L494.0 292.4 L493.3 289.9 L492.7 287.5 L492.1 285.0 L491.5 282.5 L491.0 280.0 L490.5 277.4 L490.0 274.9 L489.5 272.4 L489.1 269.8 L488.7 267.3 L488.3 264.8 L487.8 262.2 L487.5 259.7 L487.1 257.1 L486.7 254.6 L486.3 252.0 L485.9 249.5 L485.5 246.9 L485.1 244.4 L484.7 241.8 L484.3 239.3 L483.8 236.8 L483.4 234.2 L482.9 231.7 L482.4 229.2 L481.9 226.7 L481.3 224.2 L480.8 221.7 L480.1 219.2 L479.5 216.7 L478.8 214.3 L478.1 211.8 L477.3 209.4 L476.5 207.0 L475.7 204.5 L474.8 202.2 L473.8 199.8 L472.5 197.5 Z" fill="url(#gwall)"/>
<g clip-path="url(#cwall)">
<path d="M698.5 329.1 L700.6 327.8 L702.7 326.4 L704.7 325.0 L706.8 323.5 L708.8 322.0 L710.7 320.5 L712.7 318.9 L714.6 317.2 L716.4 315.5 L718.3 313.8 L720.1 312.0 L721.8 310.2 L723.6 308.4 L725.2 306.5 L726.9 304.5 L728.5 302.6 L730.0 300.6 L731.5 298.5 L733.0 296.5 L734.4 294.4 L735.7 292.2 L737.0 290.1 L738.3 287.9 L739.5 285.7 L740.7 283.4 L741.7 281.1 L742.8 278.9 L743.8 276.5 L744.7 274.2 L745.5 271.8 L746.3 269.5 L747.1 267.1 L747.7 264.6 L748.3 262.2 L748.9 259.8 L749.3 257.3 L749.7 254.8 L750.0 252.3 L750.3 249.8 L750.5 247.3 L750.6 244.8 L750.6 242.3 L750.5 239.7 L750.4 237.2 L750.2 234.7 L749.9 232.1 L749.5 229.6 L749.1 227.0 L748.5 224.5 L747.9 221.9 L747.2 219.3 L746.4 216.8 L745.5 214.3 L744.5 211.7 L743.4 209.2 L742.3 206.7 L741.1 205.2" fill="none" stroke="#808080" stroke-width="16" opacity="0.62" filter="url(#b4)"/>
<g clip-path="url(#ccrease)">
<path d="M684 224 L690 250 L695 275 L699 300 L712 302 L717 270 L717 240 L713 220 Z" fill="#141414" opacity="0.58" filter="url(#b3)"/>
<path d="M688 220 L703 318 L733 292 L741 224 Z" fill="#202020" opacity="0.33" filter="url(#b8)"/>
</g>
<path d="M694 227 L742 213 L738 230 L700 238 Z" fill="#222" opacity="0.45" filter="url(#b4)"/>
</g>
<path d="M741.1 205.2 L740.6 203.5 L739.8 201.9 L738.9 200.5 L737.8 199.4 L736.7 198.6 L735.4 197.9 L734.0 197.5 L732.6 197.3 L731.1 197.2 L729.6 197.2 L728.0 197.4 L726.5 197.7 L724.9 198.2 L723.4 198.7 L722.0 199.3 L720.5 199.9 L719.1 200.6 L717.8 201.4 L716.4 202.2 L715.1 203.0 L713.8 203.9 L712.5 204.8 L711.2 205.7 L709.9 206.6 L708.6 207.5 L707.3 208.4 L706.0 209.2 L704.7 210.1 L703.4 210.9 L702.1 211.7 L700.7 212.4 L699.4 213.2 L698.1 214.0 L696.8 214.9 L695.6 215.9 L694.5 217.1 L694.5 217.1 L693.5 224.3 L693.5 224.3 L695.0 223.9 L696.4 223.6 L697.9 223.3 L699.4 223.0 L700.9 222.7 L702.4 222.5 L704.0 222.2 L705.6 222.0 L707.2 221.7 L708.8 221.5 L710.4 221.3 L712.1 221.0 L713.7 220.8 L715.3 220.5 L716.9 220.2 L718.5 219.9 L720.1 219.5 L721.6 219.2 L723.2 218.7 L724.7 218.3 L726.2 217.8 L727.6 217.2 L729.1 216.6 L730.4 216.0 L731.8 215.2 L733.1 214.4 L734.3 213.6 L735.5 212.7 L736.7 211.6 L737.7 210.6 L738.7 209.4 L739.7 208.1 L740.6 206.7 L741.1 205.2 Z" fill="url(#gtongue)"/>
<path d="M472.5 197.5 L474.8 197.0 L477.1 197.2 L479.4 197.8 L481.7 198.6 L484.0 199.6 L486.3 200.7 L488.6 201.9 L490.9 203.1 L493.2 204.3 L495.5 205.5 L497.8 206.6 L500.1 207.7 L502.5 208.8 L504.8 209.9 L507.1 211.0 L509.4 212.0 L511.7 213.0 L514.1 214.0 L516.4 215.0 L518.7 216.0 L521.0 216.9 L523.4 217.9 L525.7 218.8 L528.1 219.7 L530.4 220.6 L532.8 221.5 L535.2 222.3 L537.5 223.2 L539.9 224.0 L542.3 224.8 L544.7 225.7 L547.1 226.5 L549.5 227.3 L551.9 228.0 L554.3 228.8 L556.8 229.5 L559.2 230.3 L561.6 231.0 L564.1 231.7 L566.5 232.3 L569.0 233.0 L571.4 233.6 L573.9 234.2 L576.4 234.7 L578.8 235.3 L581.3 235.8 L583.8 236.3 L586.3 236.7 L588.8 237.1 L591.3 237.5 L593.8 237.8 L596.3 238.2 L598.8 238.4 L601.3 238.7 L603.8 238.9 L606.4 239.0 L608.9 239.1 L611.4 239.2 L614.0 239.2 L616.5 239.2 L619.0 239.2 L621.6 239.0 L624.1 238.9 L626.6 238.7 L629.1 238.4 L631.6 238.1 L634.1 237.7 L636.6 237.3 L639.1 236.8 L641.6 236.2 L644.0 235.6 L646.5 234.9 L648.9 234.2 L651.3 233.4 L653.6 232.5 L656.0 231.5 L658.3 230.5 L660.6 229.4 L662.9 228.2 L665.2 227.0 L667.4 225.7 L669.6 224.3 L671.8 222.9 L674.0 221.6 L676.2 220.3 L678.4 219.1 L680.7 218.0 L682.9 217.1 L685.3 216.3 L687.6 215.8 L690.1 215.6 L692.5 215.8 L694.5 217.1 L694.5 217.1 L694.0 219.6 L692.8 222.0 L691.5 224.2 L690.1 226.4 L688.6 228.4 L687.1 230.3 L685.4 232.2 L683.6 233.9 L681.8 235.5 L679.9 237.1 L677.9 238.5 L675.9 239.8 L673.7 241.1 L671.6 242.3 L669.3 243.4 L667.1 244.4 L664.8 245.4 L662.4 246.2 L660.0 247.0 L657.6 247.8 L655.1 248.5 L652.6 249.1 L650.1 249.6 L647.6 250.1 L645.0 250.6 L642.5 250.9 L639.9 251.3 L637.4 251.6 L634.8 251.8 L632.3 252.0 L629.7 252.2 L627.2 252.3 L624.6 252.3 L622.0 252.4 L619.5 252.3 L616.9 252.3 L614.4 252.2 L611.9 252.0 L609.3 251.8 L606.8 251.6 L604.3 251.3 L601.8 251.0 L599.3 250.7 L596.8 250.3 L594.3 249.9 L591.9 249.5 L589.4 249.0 L587.0 248.5 L584.5 248.0 L582.1 247.4 L579.6 246.9 L577.2 246.3 L574.7 245.6 L572.3 245.0 L569.9 244.3 L567.5 243.6 L565.1 242.9 L562.6 242.2 L560.2 241.5 L557.8 240.7 L555.4 240.0 L553.0 239.2 L550.6 238.4 L548.2 237.5 L545.8 236.7 L543.4 235.8 L541.0 235.0 L538.7 234.1 L536.3 233.2 L533.9 232.2 L531.6 231.3 L529.2 230.3 L526.9 229.3 L524.6 228.3 L522.2 227.3 L519.9 226.2 L517.6 225.2 L515.3 224.1 L513.1 223.0 L510.8 221.8 L508.5 220.7 L506.3 219.5 L504.1 218.3 L501.9 217.1 L499.7 215.8 L497.5 214.6 L495.3 213.3 L493.1 212.0 L491.0 210.7 L488.9 209.3 L486.7 207.9 L484.7 206.5 L482.6 205.1 L480.5 203.7 L478.5 202.2 L476.4 200.7 L474.4 199.2 L472.5 197.5 Z" fill="url(#grim)"/>
<path d="M472.5 197.5 L473.8 199.8 L474.8 202.2 L475.7 204.5 L476.5 207.0 L477.3 209.4 L478.1 211.8 L478.8 214.3 L479.5 216.7 L480.1 219.2 L480.8 221.7 L481.3 224.2 L481.9 226.7 L482.4 229.2 L482.9 231.7 L483.4 234.2 L483.8 236.8 L484.3 239.3 L484.7 241.8 L485.1 244.4 L485.5 246.9 L485.9 249.5 L486.3 252.0 L486.7 254.6 L487.1 257.1 L487.5 259.7 L487.8 262.2 L488.3 264.8 L488.7 267.3 L489.1 269.8 L489.5 272.4 L490.0 274.9 L490.5 277.4 L491.0 280.0 L491.5 282.5 L492.1 285.0 L492.7 287.5 L493.3 289.9 L494.0 292.4 L494.7 294.9 L495.4 297.3 L496.2 299.7 L497.1 302.2 L497.9 304.6 L498.9 307.0 L499.9 309.4 L500.9 311.7 L502.0 314.1 L503.2 316.4 L504.4 318.7 L505.5 321.0" fill="none" stroke="#131313" stroke-width="1.05" stroke-linecap="round" stroke-linejoin="round"/>
<path d="M472.5 197.5 L474.8 197.0 L477.1 197.2 L479.4 197.8 L481.7 198.6 L484.0 199.6 L486.3 200.7 L488.6 201.9 L490.9 203.1 L493.2 204.3 L495.5 205.5 L497.8 206.6 L500.1 207.7 L502.5 208.8 L504.8 209.9 L507.1 211.0 L509.4 212.0 L511.7 213.0 L514.1 214.0 L516.4 215.0 L518.7 216.0 L521.0 216.9 L523.4 217.9 L525.7 218.8 L528.1 219.7 L530.4 220.6 L532.8 221.5 L535.2 222.3 L537.5 223.2 L539.9 224.0 L542.3 224.8 L544.7 225.7 L547.1 226.5 L549.5 227.3 L551.9 228.0 L554.3 228.8 L556.8 229.5 L559.2 230.3 L561.6 231.0 L564.1 231.7 L566.5 232.3 L569.0 233.0 L571.4 233.6 L573.9 234.2 L576.4 234.7 L578.8 235.3 L581.3 235.8 L583.8 236.3 L586.3 236.7 L588.8 237.1 L591.3 237.5 L593.8 237.8 L596.3 238.2 L598.8 238.4 L601.3 238.7 L603.8 238.9 L606.4 239.0 L608.9 239.1 L611.4 239.2 L614.0 239.2 L616.5 239.2 L619.0 239.2 L621.6 239.0 L624.1 238.9 L626.6 238.7 L629.1 238.4 L631.6 238.1 L634.1 237.7 L636.6 237.3 L639.1 236.8 L641.6 236.2 L644.0 235.6 L646.5 234.9 L648.9 234.2 L651.3 233.4 L653.6 232.5 L656.0 231.5 L658.3 230.5 L660.6 229.4 L662.9 228.2 L665.2 227.0 L667.4 225.7 L669.6 224.3 L671.8 222.9 L674.0 221.6 L676.2 220.3 L678.4 219.1 L680.7 218.0 L682.9 217.1 L685.3 216.3 L687.6 215.8 L690.1 215.6 L692.5 215.8 L694.5 217.1" fill="none" stroke="#131313" stroke-width="1.05" stroke-linecap="round" stroke-linejoin="round"/>
<path d="M472.5 197.5 L474.4 199.2 L476.4 200.7 L478.5 202.2 L480.5 203.7 L482.6 205.1 L484.7 206.5 L486.7 207.9 L488.9 209.3 L491.0 210.7 L493.1 212.0 L495.3 213.3 L497.5 214.6 L499.7 215.8 L501.9 217.1 L504.1 218.3 L506.3 219.5 L508.5 220.7 L510.8 221.8 L513.1 223.0 L515.3 224.1 L517.6 225.2 L519.9 226.2 L522.2 227.3 L524.6 228.3 L526.9 229.3 L529.2 230.3 L531.6 231.3 L533.9 232.2 L536.3 233.2 L538.7 234.1 L541.0 235.0 L543.4 235.8 L545.8 236.7 L548.2 237.5 L550.6 238.4 L553.0 239.2 L555.4 240.0 L557.8 240.7 L560.2 241.5 L562.6 242.2 L565.1 242.9 L567.5 243.6 L569.9 244.3 L572.3 245.0 L574.7 245.6 L577.2 246.3 L579.6 246.9 L582.1 247.4 L584.5 248.0 L587.0 248.5 L589.4 249.0 L591.9 249.5 L594.3 249.9 L596.8 250.3 L599.3 250.7 L601.8 251.0 L604.3 251.3 L606.8 251.6 L609.3 251.8 L611.9 252.0 L614.4 252.2 L616.9 252.3 L619.5 252.3 L622.0 252.4 L624.6 252.3 L627.2 252.3 L629.7 252.2 L632.3 252.0 L634.8 251.8 L637.4 251.6 L639.9 251.3 L642.5 250.9 L645.0 250.6 L647.6 250.1 L650.1 249.6 L652.6 249.1 L655.1 248.5 L657.6 247.8 L660.0 247.0 L662.4 246.2 L664.8 245.4 L667.1 244.4 L669.3 243.4 L671.6 242.3 L673.7 241.1 L675.9 239.8 L677.9 238.5 L679.9 237.1 L681.8 235.5 L683.6 233.9 L685.4 232.2 L687.1 230.3 L688.6 228.4 L690.1 226.4 L691.5 224.2 L692.8 222.0 L694.0 219.6 L694.5 217.1" fill="none" stroke="#131313" stroke-width="1.05" stroke-linecap="round" stroke-linejoin="round"/>
<path d="M504.5 342.0 L506.6 343.6 L508.7 344.8 L510.9 346.0 L513.1 347.2 L515.3 348.4 L517.5 349.6 L519.7 350.7 L522.0 351.8 L524.2 352.9 L526.5 354.0 L528.8 355.0 L531.1 356.0 L533.4 357.0 L535.7 358.0 L538.0 358.9 L540.4 359.9 L542.7 360.8 L545.1 361.6 L547.5 362.5 L549.9 363.3 L552.3 364.1 L554.7 364.9 L557.1 365.6 L559.5 366.4 L561.9 367.1 L564.3 367.7 L566.8 368.4 L569.2 369.0 L571.7 369.6 L574.1 370.1 L576.6 370.7 L579.1 371.2 L581.6 371.7 L584.0 372.1 L586.5 372.6 L589.0 373.0 L591.5 373.3 L594.0 373.7 L596.5 374.0 L599.0 374.3 L601.5 374.5 L604.0 374.8 L606.6 375.0 L609.1 375.1 L611.6 375.3 L614.1 375.4 L616.6 375.5 L619.1 375.5 L621.6 375.6 L624.1 375.5 L626.7 375.5 L629.2 375.4 L631.7 375.3 L634.2 375.2 L636.7 375.1 L639.2 374.9 L641.7 374.6 L644.2 374.4 L646.7 374.1 L649.2 373.8 L651.7 373.4 L654.1 373.1 L656.6 372.6 L659.1 372.2 L661.6 371.7 L664.0 371.2 L666.5 370.7 L668.9 370.1 L671.3 369.5 L673.8 368.8 L676.2 368.1 L678.6 367.4 L681.0 366.7 L683.4 365.9 L685.8 365.1 L688.2 364.2 L690.5 363.4 L692.9 362.4 L695.2 361.5 L697.6 360.5 L699.9 359.5 L702.2 358.4 L704.5 357.3 L706.8 356.2 L709.1 355.0 L711.3 353.8 L713.5 352.6 L715.8 351.3 L717.9 350.0 L720.1 348.7 L722.3 347.3 L724.4 345.9 L726.5 344.5 L728.6 343.0 L730.6 341.5 L732.6 340.0 L734.6 338.4 L736.6 336.8 L738.5 335.2 L740.4 333.5 L742.3 331.8 L744.1 330.1 L745.9 328.3 L747.6 326.6 L749.3 324.7 L751.0 322.9 L752.6 321.0 L754.2 319.1 L755.8 317.2 L757.3 315.2 L758.7 313.2 L760.1 311.2 L761.5 309.1 L762.8 307.0 L764.1 304.9 L765.3 302.8 L766.5 300.6 L767.6 298.4 L768.6 296.2 L769.6 294.0 L770.6 291.7 L771.5 289.4 L772.3 287.0 L773.1 284.7 L773.8 282.3 L774.5 279.9 L775.1 277.5 L775.7 275.1 L776.2 272.6 L776.7 270.1 L777.1 267.6 L777.4 265.1 L777.7 262.6 L778.0 260.1 L778.2 257.5 L778.3 255.0 L778.4 252.4 L778.5 249.8 L778.5 247.2 L778.4 244.6 L778.3 242.0 L778.1 239.4 L777.9 236.7 L777.6 234.1 L777.3 231.5 L776.9 228.9 L776.4 226.3 L775.9 223.8 L775.3 221.2 L774.6 218.7 L773.9 216.2 L773.1 213.7 L772.3 211.3 L771.4 208.9 L770.4 206.6 L769.3 204.3 L768.1 202.0 L766.9 199.8 L765.6 197.7 L764.2 195.6 L762.8 193.6 L761.2 191.6 L759.6 189.8 L757.8 188.0 L756.0 186.2 L754.2 184.6 L752.2 183.1 L750.2 181.7 L748.2 180.4 L746.0 179.2 L743.9 178.2 L741.7 177.3 L739.5 176.6 L737.2 176.1 L734.9 175.8 L732.6 175.6 L730.3 175.6 L728.0 175.9 L725.8 176.3 L723.5 176.9 L721.2 177.6 L718.9 178.5 L716.7 179.5 L714.5 180.7 L712.4 182.0 L710.3 183.4 L708.3 184.9 L706.3 186.5 L704.4 188.2 L702.5 189.9 L700.6 191.8 L698.8 193.7 L697.1 195.6 L695.3 197.6 L693.6 199.6 L691.9 201.6 L690.3 203.6 L688.6 205.7 L686.9 207.7 L685.2 209.7 L683.5 211.7 L681.8 213.7 L680.1 215.6 L678.4 217.5 L676.6 219.3 L674.8 221.1 L672.9 222.7 L671.1 224.3 L669.1 225.8 L667.1 227.2 L665.0 228.5 L662.9 229.6 L660.7 230.7 L658.4 231.6 L656.1 232.3 L653.6 232.9 L651.0 233.5" fill="none" stroke="#131313" stroke-width="1.05" stroke-linecap="round" stroke-linejoin="round"/>
<path d="M505.5 321.0 L508.3 321.6 L510.6 322.5 L512.8 323.4 L515.1 324.2 L517.4 325.1 L519.7 326.0 L522.0 326.8 L524.3 327.7 L526.7 328.6 L529.0 329.4 L531.4 330.3 L533.7 331.1 L536.1 331.9 L538.5 332.8 L540.9 333.6 L543.3 334.4 L545.7 335.2 L548.1 335.9 L550.5 336.7 L553.0 337.5 L555.4 338.2 L557.9 338.9 L560.3 339.6 L562.8 340.3 L565.3 341.0 L567.8 341.6 L570.3 342.2 L572.8 342.8 L575.3 343.4 L577.8 344.0 L580.3 344.5 L582.8 345.0 L585.4 345.5 L587.9 345.9 L590.4 346.3 L593.0 346.7 L595.5 347.1 L598.1 347.4 L600.6 347.7 L603.2 348.0 L605.8 348.2 L608.3 348.4 L610.9 348.6 L613.5 348.7 L616.1 348.8 L618.6 348.9 L621.2 348.9 L623.8 348.9 L626.4 348.9 L628.9 348.8 L631.5 348.7 L634.0 348.5 L636.6 348.3 L639.1 348.1 L641.7 347.8 L644.2 347.5 L646.7 347.2 L649.2 346.8 L651.7 346.4 L654.2 345.9 L656.7 345.4 L659.2 344.8 L661.6 344.3 L664.1 343.6 L666.5 343.0 L668.9 342.3 L671.3 341.5 L673.7 340.7 L676.1 339.9 L678.4 339.0 L680.7 338.1 L683.0 337.1 L685.3 336.1 L687.6 335.1 L689.8 334.0 L692.0 332.8 L694.2 331.6 L696.4 330.4 L698.5 329.1 L700.6 327.8 L702.7 326.4 L704.7 325.0 L706.8 323.5 L708.8 322.0 L710.7 320.5 L712.7 318.9 L714.6 317.2 L716.4 315.5 L718.3 313.8 L720.1 312.0 L721.8 310.2 L723.6 308.4 L725.2 306.5 L726.9 304.5 L728.5 302.6 L730.0 300.6 L731.5 298.5 L733.0 296.5 L734.4 294.4 L735.7 292.2 L737.0 290.1 L738.3 287.9 L739.5 285.7 L740.7 283.4 L741.7 281.1 L742.8 278.9 L743.8 276.5 L744.7 274.2 L745.5 271.8 L746.3 269.5 L747.1 267.1 L747.7 264.6 L748.3 262.2 L748.9 259.8 L749.3 257.3 L749.7 254.8 L750.0 252.3 L750.3 249.8 L750.5 247.3 L750.6 244.8 L750.6 242.3 L750.5 239.7 L750.4 237.2 L750.2 234.7 L749.9 232.1 L749.5 229.6 L749.1 227.0 L748.5 224.5 L747.9 221.9 L747.2 219.3 L746.4 216.8 L745.5 214.3 L744.5 211.7 L743.4 209.2 L742.3 206.7 L741.1 205.2" fill="none" stroke="#131313" stroke-width="1.05" stroke-linecap="round" stroke-linejoin="round"/>
<path d="M741.1 205.2 L740.6 203.5 L739.8 201.9 L738.9 200.5 L737.8 199.4 L736.7 198.6 L735.4 197.9 L734.0 197.5 L732.6 197.3 L731.1 197.2 L729.6 197.2 L728.0 197.4 L726.5 197.7 L724.9 198.2 L723.4 198.7 L722.0 199.3 L720.5 199.9 L719.1 200.6 L717.8 201.4 L716.4 202.2 L715.1 203.0 L713.8 203.9 L712.5 204.8 L711.2 205.7 L709.9 206.6 L708.6 207.5 L707.3 208.4 L706.0 209.2 L704.7 210.1 L703.4 210.9 L702.1 211.7 L700.7 212.4 L699.4 213.2 L698.1 214.0 L696.8 214.9 L695.6 215.9 L694.5 217.1" fill="none" stroke="#131313" stroke-width="1.05" stroke-linecap="round" stroke-linejoin="round"/>
<path d="M693.5 224.3 L695.0 223.9 L696.4 223.6 L697.9 223.3 L699.4 223.0 L700.9 222.7 L702.4 222.5 L704.0 222.2 L705.6 222.0 L707.2 221.7 L708.8 221.5 L710.4 221.3 L712.1 221.0 L713.7 220.8 L715.3 220.5 L716.9 220.2 L718.5 219.9 L720.1 219.5 L721.6 219.2 L723.2 218.7 L724.7 218.3 L726.2 217.8 L727.6 217.2 L729.1 216.6 L730.4 216.0 L731.8 215.2 L733.1 214.4 L734.3 213.6 L735.5 212.7 L736.7 211.6 L737.7 210.6 L738.7 209.4 L739.7 208.1 L740.6 206.7 L741.1 205.2" fill="none" stroke="#131313" stroke-width="1.05" stroke-linecap="round" stroke-linejoin="round"/>
<path d="M474.5 199.5 L476.1 201.6 L477.2 203.9 L478.2 206.3 L479.1 208.7 L480.0 211.1 L480.9 213.5 L481.7 215.9 L482.5 218.3 L483.2 220.8 L483.9 223.2 L484.5 225.7 L485.1 228.2 L485.7 230.7 L486.3 233.2 L486.8 235.7 L487.3 238.2 L487.8 240.7 L488.2 243.3 L488.7 245.8 L489.1 248.3 L489.5 250.9 L490.0 253.4 L490.4 256.0 L490.8 258.5 L491.2 261.1 L491.6 263.6 L492.1 266.2 L492.5 268.7 L493.0 271.3 L493.4 273.8 L493.9 276.3 L494.4 278.9 L494.9 281.4 L495.5 283.9 L496.1 286.4 L496.7 288.9 L497.3 291.4 L498.0 293.9 L498.7 296.3 L499.5 298.8 L500.3 301.2 L501.1 303.7 L502.0 306.1 L503.0 308.5 L504.0 310.9 L505.0 313.2 L506.2 315.6 L507.0 318.0" fill="none" stroke="#1c1c1c" stroke-width="0.6" opacity="0.8"/>
<path d="M505.5 321 L504.5 342" fill="none" stroke="#131313" stroke-width="1.05" stroke-linecap="round" stroke-linejoin="round"/>
<path d="M488.1 321.8 Q491.5 332 504.5 342" fill="none" stroke="#131313" stroke-width="1.05" stroke-linecap="round" stroke-linejoin="round"/>
<path d="M708 186.2 L724 199.6" fill="none" stroke="#131313" stroke-width="1.05" stroke-linecap="round" stroke-linejoin="round"/>
<path d="M741.1 205.2 L759.3 190.7" fill="none" stroke="#131313" stroke-width="1.05" stroke-linecap="round" stroke-linejoin="round"/>
<path d="M866.7 58.6 L697.5 217.5" stroke="#1e1e1e" stroke-width="0.85" fill="none"/>
<path d="M867.7 92.6 L743.8 243.2" stroke="#1e1e1e" stroke-width="0.85" fill="none"/>
<path d="M929 205 L794.5 205" stroke="#1e1e1e" stroke-width="0.85" fill="none"/>
<path d="M461 190.6 L474 198" stroke="#1e1e1e" stroke-width="0.85" fill="none"/>
<path d="M397.8 250 L502.8 256.7" stroke="#1e1e1e" stroke-width="0.85" fill="none"/>
<path d="M483.5 308.8 L511.8 300.6" stroke="#1e1e1e" stroke-width="0.85" fill="none"/>
<path d="M607.7 255.3 L715.5 391.2" stroke="#1e1e1e" stroke-width="0.85" fill="none"/>
<path d="M608.4 336.8 L712.5 425.5" stroke="#1e1e1e" stroke-width="0.85" fill="none"/>
<circle cx="496.4" cy="213.0" r="1.9" fill="#4a4a4a" stroke="#151515" stroke-width="0.8"/>
<circle cx="505.0" cy="256.7" r="1.9" fill="#4a4a4a" stroke="#151515" stroke-width="0.8"/>
<circle cx="513.8" cy="300.0" r="1.9" fill="#4a4a4a" stroke="#151515" stroke-width="0.8"/>
<path d="M498 207.6 L501.4 198.8 L499.2 198 L504.6 191.6 L506.2 200.4 L504 199.7 L500.6 208.6 Z" fill="#b5242a" stroke="#5c1010" stroke-width="0.5"/>
<path d="M697.5 217.5 L712.0 218.9" stroke="#1c84dc" stroke-width="2"/>
<path d="M719.0 219.6 L711.8 221.5 L712.3 216.3 Z" fill="#1c84dc" stroke="#0f5ea8" stroke-width="0.4"/>
<circle cx="697.5" cy="217.5" r="2.1" fill="#1c84dc" stroke="#0d4f92" stroke-width="0.6"/>
<path d="M743.8 243.3 L759.5 244.2" stroke="#1c84dc" stroke-width="2"/>
<path d="M766.5 244.6 L759.4 246.8 L759.7 241.6 Z" fill="#1c84dc" stroke="#0f5ea8" stroke-width="0.4"/>
<circle cx="743.8" cy="243.3" r="2.1" fill="#1c84dc" stroke="#0d4f92" stroke-width="0.6"/>
<path d="M607.7 255.3 L606.3 270.0" stroke="#1c84dc" stroke-width="2"/>
<path d="M605.6 277.0 L603.7 269.8 L608.9 270.3 Z" fill="#1c84dc" stroke="#0f5ea8" stroke-width="0.4"/>
<circle cx="607.7" cy="255.3" r="2.1" fill="#1c84dc" stroke="#0d4f92" stroke-width="0.6"/>
<path d="M608.4 336.8 L606.9 351.5" stroke="#1c84dc" stroke-width="2"/>
<path d="M606.2 358.5 L604.3 351.3 L609.5 351.8 Z" fill="#1c84dc" stroke="#0f5ea8" stroke-width="0.4"/>
<circle cx="608.4" cy="336.8" r="2.1" fill="#1c84dc" stroke="#0d4f92" stroke-width="0.6"/>
<path d="M794.5 202 l2.7 2.6 l-2.7 2.6 l-2.7 -2.6 z" fill="#1c84dc" stroke="#0d4f92" stroke-width="0.6"/>
<path d="M801.7 485.2 L723 478.6" stroke="#2f74a6" stroke-width="4"/>
<path d="M723.4 478.6 L690 476" stroke="#e02020" stroke-width="3.6"/>
<path d="M671.5 474.6 L691.8 471.6 L691 480.9 Z" fill="#e31a1a"/>
<path d="M801.7 485.2 L794.6 563" stroke="#2f74a6" stroke-width="4"/>
<path d="M794.7 562.6 L791.6 597.5" stroke="#1fd41f" stroke-width="3.6"/>
<path d="M790.3 614.8 L786.6 596.3 L797.3 597.2 Z" fill="#1fd41f"/>
<path d="M801.7 485.2 L792 473" stroke="#1e3150" stroke-width="3.4" stroke-linecap="round"/>
<circle cx="790.4" cy="471.4" r="4.8" fill="#0c1478"/>
<circle cx="801.6" cy="485.4" r="2.6" fill="#2a4a66"/>
<path d="M41.5 577.8 L37.6 633" stroke="#1fae1f" stroke-width="2.9"/>
<path d="M36.6 643 L34.2 632 L40.6 632.6 Z" fill="#1fae1f"/>
<path d="M72.2 613.6 L17 609.2" stroke="#b81414" stroke-width="3"/>
<path d="M5.2 608.2 L18.3 605.6 L17.8 612.6 Z" fill="#c01616"/>
<circle cx="36.8" cy="608.8" r="3.5" fill="#0c1266"/><circle cx="41.6" cy="614.6" r="1.6" fill="#0c1266"/>
</svg>
<div style="position:absolute;left:10.0px;top:7.4px;width:327.6px;height:401.4px;box-sizing:border-box;background:#f1f1f1;border:1px solid #d2d2d2;box-shadow:0 1px 8px rgba(0,0,0,0.36);"></div>
<div style="position:absolute;left:11.0px;top:8.4px;width:325.6px;height:19.1px;box-sizing:border-box;background:#ffffff;"></div>
<div style="position:absolute;left:44.2px;top:42.4px;width:285.8px;height:15.9px;box-sizing:border-box;background:#f8f8f8;border:1px solid #ececec;"></div>
<div style="position:absolute;left:17.0px;top:75.2px;width:313.0px;height:1.0px;box-sizing:border-box;background:#6a6a6a;"></div>
<div style="position:absolute;left:17.0px;top:82.0px;width:313.0px;height:161.4px;box-sizing:border-box;background:#ffffff;border:1px solid #d0d0d0;"></div>
<div style="position:absolute;left:18.0px;top:83.0px;width:311.0px;height:16.2px;box-sizing:border-box;background:#f5f5f5;border-bottom:1px solid #d6d6d6;"></div>
<div style="position:absolute;left:42.5px;top:83.0px;width:1.0px;height:15.6px;box-sizing:border-box;background:#d4d4d4;"></div>
<div style="position:absolute;left:67.8px;top:83.0px;width:1.0px;height:15.6px;box-sizing:border-box;background:#d4d4d4;"></div>
<div style="position:absolute;left:141.5px;top:83.0px;width:1.0px;height:15.6px;box-sizing:border-box;background:#d4d4d4;"></div>
<div style="position:absolute;left:183.5px;top:83.0px;width:1.0px;height:15.6px;box-sizing:border-box;background:#d4d4d4;"></div>
<div style="position:absolute;left:228.6px;top:83.0px;width:1.0px;height:15.6px;box-sizing:border-box;background:#d4d4d4;"></div>
<div style="position:absolute;left:44.0px;top:100.3px;width:23.2px;height:16.0px;box-sizing:border-box;background:#fff;border:1px solid #f1f1f1;"></div>
<div style="position:absolute;left:142.3px;top:100.3px;width:40.3px;height:16.0px;box-sizing:border-box;background:#fff;border:1px solid #ececec;"></div>
<div style="position:absolute;left:44.0px;top:117.8px;width:23.2px;height:16.0px;box-sizing:border-box;background:#fff;border:1px solid #f1f1f1;"></div>
<div style="position:absolute;left:142.3px;top:117.8px;width:40.3px;height:16.0px;box-sizing:border-box;background:#fff;border:1px solid #ececec;"></div>
<div style="position:absolute;left:44.0px;top:135.4px;width:23.2px;height:16.0px;box-sizing:border-box;background:#fff;border:1px solid #f1f1f1;"></div>
<div style="position:absolute;left:142.3px;top:135.4px;width:40.3px;height:16.0px;box-sizing:border-box;background:#fff;border:1px solid #ececec;"></div>
<div style="position:absolute;left:44.0px;top:152.9px;width:23.2px;height:16.0px;box-sizing:border-box;background:#fff;border:1px solid #f1f1f1;"></div>
<div style="position:absolute;left:142.3px;top:152.9px;width:40.3px;height:16.0px;box-sizing:border-box;background:#fff;border:1px solid #ececec;"></div>
<div style="position:absolute;left:44.0px;top:170.5px;width:23.2px;height:16.0px;box-sizing:border-box;background:#fff;border:1px solid #f1f1f1;"></div>
<div style="position:absolute;left:142.3px;top:170.5px;width:40.3px;height:16.0px;box-sizing:border-box;background:#fff;border:1px solid #ececec;"></div>
<div style="position:absolute;left:44.0px;top:188.1px;width:23.2px;height:16.0px;box-sizing:border-box;background:#fff;border:1px solid #f1f1f1;"></div>
<div style="position:absolute;left:142.3px;top:188.1px;width:40.3px;height:16.0px;box-sizing:border-box;background:#fff;border:1px solid #ececec;"></div>
<div style="position:absolute;left:18.0px;top:231.0px;width:311.0px;height:11.4px;box-sizing:border-box;background:#f0f0f0;"></div>
<div style="position:absolute;left:29.0px;top:231.0px;width:274.0px;height:11.4px;box-sizing:border-box;background:#c2c2c2;"></div>
<div style="position:absolute;left:17.0px;top:242.6px;width:313.0px;height:21.6px;box-sizing:border-box;background:#f4f4f4;border:1px solid #d0d0d0;"></div>
<div style="position:absolute;left:17.0px;top:279.6px;width:313.0px;height:1.1px;box-sizing:border-box;background:#6a6a6a;"></div>
<div style="position:absolute;left:17.0px;top:315.5px;width:313.0px;height:1.3px;box-sizing:border-box;background:#808080;"></div>
<div style="position:absolute;left:17.0px;top:332.7px;width:313.0px;height:1.3px;box-sizing:border-box;background:#9a9a9a;"></div>
<div style="position:absolute;left:55.0px;top:340.7px;width:275.0px;height:15.5px;box-sizing:border-box;background:#f8f8f8;border:1px solid #ececec;"></div>
<div style="position:absolute;left:19.4px;top:383.4px;width:98.0px;height:19.4px;box-sizing:border-box;background:#f6f6f6;border:1px solid #e4e4e4;"></div>
<div style="position:absolute;left:235.2px;top:386.0px;width:44.1px;height:15.3px;box-sizing:border-box;background:#f6f6f6;border:1px solid #e0e0e0;"></div>
<div style="position:absolute;left:286.0px;top:386.0px;width:44.0px;height:15.3px;box-sizing:border-box;background:#f6f6f6;border:1px solid #e0e0e0;"></div>
<div style="position:absolute;left:141.1px;top:73.9px;width:43.7px;height:138.7px;box-sizing:border-box;border:2.3px solid #1ba685;box-shadow:0 1px 2.5px rgba(0,0,0,0.35);"></div>
<div style="position:absolute;left:17.0px;top:380.6px;width:102.8px;height:24.8px;box-sizing:border-box;border:2px solid #1ba685;box-shadow:0 1px 2.5px rgba(0,0,0,0.3);"></div>
<div style="position:absolute;left:350.0px;top:356.0px;width:200.0px;height:264.6px;box-sizing:border-box;background:#f0f0f0;border:1px solid #929292;box-shadow:0 2px 10px rgba(0,0,0,0.38);"></div>
<div style="position:absolute;left:351.0px;top:357.0px;width:198.0px;height:18.6px;box-sizing:border-box;background:#ffffff;"></div>
<div style="position:absolute;left:480.3px;top:382.5px;width:62.3px;height:16.2px;box-sizing:border-box;background:#fff;border:1px solid #b9b9b9;"></div>
<div style="position:absolute;left:357.2px;top:415.1px;width:185.4px;height:1.1px;box-sizing:border-box;background:#4a4a4a;"></div>
<div style="position:absolute;left:357.2px;top:422.6px;width:10.6px;height:10.8px;box-sizing:border-box;background:#fff;border:1px solid #bdbdbd;"></div>
<div style="position:absolute;left:357.2px;top:440.2px;width:10.6px;height:10.8px;box-sizing:border-box;background:#fff;border:1px solid #bdbdbd;"></div>
<div style="position:absolute;left:357.2px;top:457.9px;width:10.6px;height:10.8px;box-sizing:border-box;background:#fff;border:1px solid #bdbdbd;"></div>
<div style="position:absolute;left:357.2px;top:492.2px;width:10.6px;height:10.8px;box-sizing:border-box;background:#fff;border:1px solid #bdbdbd;"></div>
<div style="position:absolute;left:357.2px;top:509.9px;width:10.6px;height:10.8px;box-sizing:border-box;background:#fff;border:1px solid #bdbdbd;"></div>
<div style="position:absolute;left:357.2px;top:527.6px;width:10.6px;height:10.8px;box-sizing:border-box;background:#fff;border:1px solid #bdbdbd;"></div>
<div style="position:absolute;left:357.2px;top:484.5px;width:185.4px;height:1.1px;box-sizing:border-box;background:#4a4a4a;"></div>
<div style="position:absolute;left:357.2px;top:555.0px;width:185.4px;height:1.1px;box-sizing:border-box;background:#4a4a4a;"></div>
<div style="position:absolute;left:444.8px;top:562.0px;width:97.8px;height:16.7px;box-sizing:border-box;background:#fff;border:1px solid #cc666d;"></div>
<div style="position:absolute;left:463.0px;top:597.8px;width:31.6px;height:15.8px;box-sizing:border-box;background:#fbfbfb;border:1px solid #c8545c;"></div>
<div style="position:absolute;left:498.4px;top:597.8px;width:44.2px;height:15.8px;box-sizing:border-box;background:#fbfbfb;border:1px solid #c4c4c4;"></div>
<div style="position:absolute;left:808.4px;top:2.0px;width:188.4px;height:20.0px;box-sizing:border-box;background:#f3f3f3;border:1px solid #cfcfcf;"></div>
<div style="position:absolute;left:699.3px;top:615.3px;width:37.7px;height:20.3px;box-sizing:border-box;background:#f1f1f1;border:1px solid #c6c6c6;"></div>
<div style="position:absolute;left:829.5px;top:48.4px;width:87.8px;height:10.2px;box-sizing:border-box;background:#fff;border:1px solid #d6d6d6;"></div>
<div style="position:absolute;left:841.0px;top:48.4px;width:1.0px;height:10.2px;box-sizing:border-box;background:#d6d6d6;"></div>
<div style="position:absolute;left:828.9px;top:82.6px;width:87.4px;height:10.0px;box-sizing:border-box;background:#fff;border:1px solid #d6d6d6;"></div>
<div style="position:absolute;left:840.0px;top:82.6px;width:1.0px;height:10.0px;box-sizing:border-box;background:#d6d6d6;"></div>
<div style="position:absolute;left:929.0px;top:199.6px;width:29.8px;height:10.0px;box-sizing:border-box;background:#fff;border:1px solid #d6d6d6;"></div>
<div style="position:absolute;left:940.2px;top:199.6px;width:1.0px;height:10.0px;box-sizing:border-box;background:#d6d6d6;"></div>
<div style="position:absolute;left:426.7px;top:180.4px;width:44.5px;height:10.2px;box-sizing:border-box;background:#fff;border:1px solid #d6d6d6;"></div>
<div style="position:absolute;left:439.0px;top:180.4px;width:1.0px;height:10.2px;box-sizing:border-box;background:#d6d6d6;"></div>
<div style="position:absolute;left:369.1px;top:245.2px;width:29.5px;height:9.7px;box-sizing:border-box;background:#fff;border:1px solid #d6d6d6;"></div>
<div style="position:absolute;left:380.9px;top:245.2px;width:1.0px;height:9.7px;box-sizing:border-box;background:#d6d6d6;"></div>
<div style="position:absolute;left:439.5px;top:306.5px;width:44.8px;height:9.9px;box-sizing:border-box;background:#fff;border:1px solid #d6d6d6;"></div>
<div style="position:absolute;left:451.2px;top:306.5px;width:1.0px;height:9.9px;box-sizing:border-box;background:#d6d6d6;"></div>
<div style="position:absolute;left:677.0px;top:391.2px;width:86.8px;height:10.8px;box-sizing:border-box;background:#fff;border:1px solid #d6d6d6;"></div>
<div style="position:absolute;left:688.7px;top:391.2px;width:1.0px;height:10.8px;box-sizing:border-box;background:#d6d6d6;"></div>
<div style="position:absolute;left:677.0px;top:425.5px;width:86.8px;height:10.8px;box-sizing:border-box;background:#fff;border:1px solid #d6d6d6;"></div>
<div style="position:absolute;left:688.7px;top:425.5px;width:1.0px;height:10.8px;box-sizing:border-box;background:#d6d6d6;"></div>
<div style="position:absolute;left:749.8px;top:485.6px;width:43.5px;height:9.8px;box-sizing:border-box;background:#fff;border:1px solid #d6d6d6;"></div>
<div style="position:absolute;left:761.2px;top:485.6px;width:1.0px;height:9.8px;box-sizing:border-box;background:#d6d6d6;"></div>
<svg width="999" height="648" viewBox="0 0 999 648">
<circle cx="52.8" cy="108.9" r="3.8" fill="#78b474"/><path d="M50.8 109.0 l1.5 1.6 l2.6 -3.2" stroke="#fff" stroke-width="1.2" fill="none"/>
<path d="M47 103.9 h3.6 M47.6 103.3 v3" stroke="#6a6a6a" stroke-width="0.9" fill="none" stroke-dasharray="1.2 0.8"/>
<path d="M61 107.7 h3.4 l-1.7 2 z" fill="#8c8c8c"/>
<circle cx="78.6" cy="108.0" r="1.9" fill="#8fa8e0"/>
<path d="M174.4 107.4 h3.4 l-1.7 2 z" fill="#8c8c8c"/>
<circle cx="52.8" cy="126.4" r="3.8" fill="#78b474"/><path d="M50.8 126.5 l1.5 1.6 l2.6 -3.2" stroke="#fff" stroke-width="1.2" fill="none"/>
<path d="M47 121.4 h3.6 M47.6 120.8 v3" stroke="#6a6a6a" stroke-width="0.9" fill="none" stroke-dasharray="1.2 0.8"/>
<path d="M61 125.2 h3.4 l-1.7 2 z" fill="#8c8c8c"/>
<path d="M78.6 123.6 v5 M77.3 124.8 l1.3 -1.6 l1.3 1.6 M77.7 128.8 h1.8" stroke="#6b8fd8" stroke-width="0.9" fill="none"/>
<path d="M174.4 124.9 h3.4 l-1.7 2 z" fill="#8c8c8c"/>
<circle cx="52.8" cy="144.0" r="3.8" fill="#78b474"/><path d="M50.8 144.1 l1.5 1.6 l2.6 -3.2" stroke="#fff" stroke-width="1.2" fill="none"/>
<path d="M47 139.0 h3.6 M47.6 138.4 v3" stroke="#6a6a6a" stroke-width="0.9" fill="none" stroke-dasharray="1.2 0.8"/>
<path d="M61 142.8 h3.4 l-1.7 2 z" fill="#8c8c8c"/>
<path d="M78.6 141.2 v5 M77.3 142.3 l1.3 -1.6 l1.3 1.6 M77.7 146.3 h1.8" stroke="#6b8fd8" stroke-width="0.9" fill="none"/>
<path d="M174.4 142.5 h3.4 l-1.7 2 z" fill="#8c8c8c"/>
<circle cx="52.8" cy="161.5" r="3.8" fill="#78b474"/><path d="M50.8 161.6 l1.5 1.6 l2.6 -3.2" stroke="#fff" stroke-width="1.2" fill="none"/>
<path d="M47 156.5 h3.6 M47.6 155.9 v3" stroke="#6a6a6a" stroke-width="0.9" fill="none" stroke-dasharray="1.2 0.8"/>
<path d="M61 160.3 h3.4 l-1.7 2 z" fill="#8c8c8c"/>
<path d="M78.6 158.8 v5 M77.3 159.8 l1.3 -1.6 l1.3 1.6 M77.7 163.8 h1.8" stroke="#6b8fd8" stroke-width="0.9" fill="none"/>
<path d="M174.4 160.0 h3.4 l-1.7 2 z" fill="#8c8c8c"/>
<circle cx="52.8" cy="179.1" r="3.8" fill="#78b474"/><path d="M50.8 179.2 l1.5 1.6 l2.6 -3.2" stroke="#fff" stroke-width="1.2" fill="none"/>
<path d="M47 174.1 h3.6 M47.6 173.5 v3" stroke="#6a6a6a" stroke-width="0.9" fill="none" stroke-dasharray="1.2 0.8"/>
<path d="M61 177.9 h3.4 l-1.7 2 z" fill="#8c8c8c"/>
<path d="M78.6 176.3 v5 M77.3 177.4 l1.3 -1.6 l1.3 1.6 M77.7 181.4 h1.8" stroke="#6b8fd8" stroke-width="0.9" fill="none"/>
<path d="M174.4 177.6 h3.4 l-1.7 2 z" fill="#8c8c8c"/>
<circle cx="52.8" cy="196.7" r="3.8" fill="#78b474"/><path d="M50.8 196.8 l1.5 1.6 l2.6 -3.2" stroke="#fff" stroke-width="1.2" fill="none"/>
<path d="M47 191.7 h3.6 M47.6 191.1 v3" stroke="#6a6a6a" stroke-width="0.9" fill="none" stroke-dasharray="1.2 0.8"/>
<path d="M61 195.5 h3.4 l-1.7 2 z" fill="#8c8c8c"/>
<path d="M78.6 193.9 v5 M77.3 195.0 l1.3 -1.6 l1.3 1.6 M77.7 199.0 h1.8" stroke="#6b8fd8" stroke-width="0.9" fill="none"/>
<path d="M174.4 195.2 h3.4 l-1.7 2 z" fill="#8c8c8c"/>
<path d="M24 235.1 v3 l-1.8 -1.5 z" fill="#7a7a7a"/><path d="M323 235.1 v3 l1.8 -1.5 z" fill="#555"/>
<path d="M164.4 236 h2.6 M164.4 237.4 h2.6" stroke="#555" stroke-width="0.9"/>
<g stroke="#808080" stroke-width="0.9" fill="none"><path d="M26.3 247.5 v2 M24.3 249.8 h4 v3.6 h-4 z M26.3 253.6 v2.4 M25.2 251.6 h2.2"/><path d="M30.5 254.3 v3 M29 255.8 h3" stroke="#666"/></g>
<g stroke="#808080" stroke-width="0.9" fill="none"><path d="M48.3 253 l5.2 -5 h2.4"/><circle cx="48.6" cy="252.8" r="0.9" fill="#777"/><path d="M54.6 253.7 v3 M53.1 255.2 h3" stroke="#666"/></g>
<g stroke="#858585" stroke-width="0.9" fill="none"><path d="M315.3 249.3 h6.4 M317.3 249 v-1.2 h2.4 v1.2 M316 250.5 v6 h5 v-6 M317.6 251 v5 M319.4 251 v5"/></g>
<path d="M325 306.5 v5 l-2.8 -2.5 z" fill="#666"/>
<g fill="#777"><circle cx="58.2" cy="344.4" r="0.9"/><circle cx="58.2" cy="348.2" r="0.9"/><circle cx="58.2" cy="352" r="0.9"/><circle cx="65.2" cy="344.4" r="0.9"/><path d="M60.5 344 h2.6 v0.8 h-2.6z"/><path d="M65.2 349.3 v4.6 M62.9 351.6 h4.6" stroke="#666" stroke-width="1.2"/></g>
<path d="M322.5 347.4 h3.4 l-1.7 2 z" fill="#777"/><path d="M322.5 49.4 h3.4 l-1.7 2 z" fill="#8a8a8a"/>
<circle cx="250.4" cy="393.5" r="4.2" fill="#76b470"/><path d="M248.3 393.6 l1.6 1.7 l2.8 -3.4" stroke="#fff" stroke-width="1.3" fill="none"/>
<path d="M359.8 428.3 l1.9 2 l3.4 -4.2" stroke="#2a2a2a" stroke-width="1.3" fill="none"/>
<path d="M359.8 445.9 l1.9 2 l3.4 -4.2" stroke="#2a2a2a" stroke-width="1.3" fill="none"/>
<path d="M359.8 463.6 l1.9 2 l3.4 -4.2" stroke="#2a2a2a" stroke-width="1.3" fill="none"/>
<path d="M359.8 497.9 l1.9 2 l3.4 -4.2" stroke="#2a2a2a" stroke-width="1.3" fill="none"/>
<path d="M359.8 515.6 l1.9 2 l3.4 -4.2" stroke="#2a2a2a" stroke-width="1.3" fill="none"/>
<path d="M359.8 533.3 l1.9 2 l3.4 -4.2" stroke="#2a2a2a" stroke-width="1.3" fill="none"/>
<path d="M430.5 567.4 l6 3 l-6 3 z" fill="#b3202a"/>
<g stroke="#2c4fc0" stroke-width="1.1" fill="none"><path d="M451.6 567 v4.2 l-1.8 1.6 M451.6 571.2 l3 0.6"/><path d="M454 570.6 l1.8 1.3 l-1.9 1 z" fill="#2c4fc0"/></g>
<path d="M535 389.8 h3.6 l-1.8 2.1 z" fill="#333"/><path d="M535 569.6 h3.6 l-1.8 2.1 z" fill="#333"/>
<rect x="355.6" y="360.6" width="10.2" height="10.2" rx="1" fill="#e9f0ff" stroke="#4f7fe0" stroke-width="1.1"/><circle cx="359.9" cy="364.9" r="2.5" fill="#fff" stroke="#5a6f96" stroke-width="1"/><path d="M361.8 366.8 l2.4 2.4" stroke="#5a6f96" stroke-width="1.2"/>
<path d="M531 363 l6 6 M537 363 l-6 6" stroke="#222" stroke-width="1"/>
<path d="M318.4 13.9 l6.4 6.4 M324.8 13.9 l-6.4 6.4" stroke="#8a8a8a" stroke-width="0.9"/>
<g fill="#2b2b2b"><circle cx="17" cy="13.3" r="1.2"/><circle cx="25" cy="13.3" r="1.2"/><circle cx="17" cy="21" r="1.2"/><circle cx="25" cy="21" r="1.2"/><path d="M21 14.2 l2.6 2.9 l-2.6 2.9 l-2.6 -2.9 z"/></g>
<path d="M838.6 51.6 v4.6 M837.4 52.7 l1.2 -1.5 l1.2 1.5 M837.9 56.5 h1.6" stroke="#3b78d8" stroke-width="0.9" fill="none"/>
<path d="M837.9 85.7 v4.6 M836.6 86.8 l1.2 -1.5 l1.2 1.5 M837.1 90.6 h1.6" stroke="#3b78d8" stroke-width="0.9" fill="none"/>
<path d="M938.0 202.7 v4.6 M936.8 203.8 l1.2 -1.5 l1.2 1.5 M937.2 207.6 h1.6" stroke="#3b78d8" stroke-width="0.9" fill="none"/>
<circle cx="434.6" cy="186.5" r="2" fill="none" stroke="#666" stroke-width="0.9"/><path d="M438.4 182.5 v5.6 M437.2 183.9 l1.2 -1.5 l1.2 1.5" stroke="#3b78d8" stroke-width="0.9" fill="none"/>
<circle cx="378.4" cy="249.9" r="2" fill="#3f74d6"/>
<circle cx="447.1" cy="312.4" r="2" fill="none" stroke="#666" stroke-width="0.9"/><path d="M450.9 308.4 v5.6 M449.8 309.8 l1.2 -1.5 l1.2 1.5" stroke="#3b78d8" stroke-width="0.9" fill="none"/>
<path d="M686.2 394.7 v4.6 M685.0 395.8 l1.2 -1.5 l1.2 1.5 M685.5 399.6 h1.6" stroke="#3b78d8" stroke-width="0.9" fill="none"/>
<path d="M686.2 429.0 v4.6 M685.0 430.1 l1.2 -1.5 l1.2 1.5 M685.5 433.9 h1.6" stroke="#3b78d8" stroke-width="0.9" fill="none"/>
<g stroke="#2c4fc0" stroke-width="1" fill="none"><path d="M758.3 487.3 v4 l-1.7 1.5 M758.3 491.3 l2.8 0.6"/></g>
<path d="M120 391.4 L338.5 369.6" stroke="#1ba685" stroke-width="2.5"/>
<path d="M343.8 369 L337.2 365.2 L338.2 374.4 Z" fill="#1ba685"/>
</svg>
<span style="position:absolute;left:29.7px;top:10.90px;height:13.4px;line-height:13.4px;font-size:8.40px;color:#858585;font-family:'Liberation Sans', sans-serif;font-weight:normal;white-space:pre;transform-origin:0 50%;transform:scaleX(0.7427);">RPS</span>
<span style="position:absolute;left:290.2px;top:10.10px;height:14.4px;line-height:14.4px;font-size:9.00px;color:#858585;font-family:'Liberation Sans', sans-serif;font-weight:normal;white-space:pre;transform-origin:0 50%;transform:scaleX(0.7576);">?</span>
<span style="position:absolute;left:17.0px;top:44.40px;height:13.4px;line-height:13.4px;font-size:8.40px;color:#717171;font-family:'Liberation Sans', sans-serif;font-weight:normal;white-space:pre;transform-origin:0 50%;transform:scaleX(0.9175);">Name</span>
<span style="position:absolute;left:48.5px;top:44.40px;height:13.4px;line-height:13.4px;font-size:8.40px;color:#717171;font-family:'Liberation Sans', sans-serif;font-weight:normal;white-space:pre;transform-origin:0 50%;transform:scaleX(0.9198);">RPS-Casting Alignment</span>
<span style="position:absolute;left:17.0px;top:64.80px;height:13.4px;line-height:13.4px;font-size:8.40px;color:#717171;font-family:'Liberation Sans', sans-serif;font-weight:normal;white-space:pre;transform-origin:0 50%;transform:scaleX(0.8302);">RPS rules</span>
<span style="position:absolute;left:18.7px;top:84.75px;height:13.1px;line-height:13.1px;font-size:8.20px;color:#717171;font-family:'Liberation Sans', sans-serif;font-weight:normal;white-space:pre;transform-origin:0 50%;transform:scaleX(0.8863);">No.</span>
<span style="position:absolute;left:44.0px;top:84.75px;height:13.1px;line-height:13.1px;font-size:8.20px;color:#717171;font-family:'Liberation Sans', sans-serif;font-weight:normal;white-space:pre;transform-origin:0 50%;transform:scaleX(0.8103);">Use</span>
<span style="position:absolute;left:69.4px;top:84.75px;height:13.1px;line-height:13.1px;font-size:8.20px;color:#717171;font-family:'Liberation Sans', sans-serif;font-weight:normal;white-space:pre;transform-origin:0 50%;transform:scaleX(0.8963);">Elements</span>
<span style="position:absolute;left:143.0px;top:84.75px;height:13.1px;line-height:13.1px;font-size:8.20px;color:#717171;font-family:'Liberation Sans', sans-serif;font-weight:normal;white-space:pre;transform-origin:0 50%;transform:scaleX(0.9501);">Direction</span>
<span style="position:absolute;left:183.6px;top:84.75px;height:13.1px;line-height:13.1px;font-size:8.20px;color:#717171;font-family:'Liberation Sans', sans-serif;font-weight:normal;white-space:pre;transform-origin:0 50%;transform:scaleX(0.9402);">Deviation</span>
<span style="position:absolute;left:229.8px;top:84.75px;height:13.1px;line-height:13.1px;font-size:8.20px;color:#717171;font-family:'Liberation Sans', sans-serif;font-weight:normal;white-space:pre;transform-origin:0 50%;transform:scaleX(0.9886);">Information</span>
<span style="position:absolute;left:20.0px;top:102.10px;height:13.4px;line-height:13.4px;font-size:8.40px;color:#717171;font-family:'Liberation Sans', sans-serif;font-weight:normal;white-space:pre;transform-origin:0 50%;transform:scaleX(0.6849);">1</span>
<span style="position:absolute;left:85.9px;top:102.10px;height:13.4px;line-height:13.4px;font-size:8.40px;color:#717171;font-family:'Liberation Sans', sans-serif;font-weight:normal;white-space:pre;transform-origin:0 50%;transform:scaleX(0.7220);">E3</span>
<span style="position:absolute;left:145.8px;top:102.10px;height:13.4px;line-height:13.4px;font-size:8.40px;color:#717171;font-family:'Liberation Sans', sans-serif;font-weight:normal;white-space:pre;transform-origin:0 50%;transform:scaleX(0.8487);">Y'</span>
<span style="position:absolute;left:189.0px;top:102.10px;height:13.4px;line-height:13.4px;font-size:8.40px;color:#717171;font-family:'Liberation Sans', sans-serif;font-weight:normal;white-space:pre;transform-origin:0 50%;transform:scaleX(0.8877);">0.0000 mm</span>
<div style="position:absolute;left:0;top:0;width:329px;height:648px;overflow:hidden;"><span style="position:absolute;left:231.8px;top:102.10px;height:13.4px;line-height:13.4px;font-size:8.40px;color:#717171;font-family:'Liberation Sans', sans-serif;font-weight:normal;white-space:pre;transform-origin:0 50%;transform:scaleX(0.9382);">Dynamic rule (division point)</span></div>
<span style="position:absolute;left:20.0px;top:119.65px;height:13.4px;line-height:13.4px;font-size:8.40px;color:#717171;font-family:'Liberation Sans', sans-serif;font-weight:normal;white-space:pre;transform-origin:0 50%;transform:scaleX(0.6849);">2</span>
<span style="position:absolute;left:85.9px;top:119.65px;height:13.4px;line-height:13.4px;font-size:8.40px;color:#717171;font-family:'Liberation Sans', sans-serif;font-weight:normal;white-space:pre;transform-origin:0 50%;transform:scaleX(0.8807);">D1_line_contact</span>
<span style="position:absolute;left:145.8px;top:119.65px;height:13.4px;line-height:13.4px;font-size:8.40px;color:#717171;font-family:'Liberation Sans', sans-serif;font-weight:normal;white-space:pre;transform-origin:0 50%;transform:scaleX(0.8487);">X'</span>
<span style="position:absolute;left:189.0px;top:119.65px;height:13.4px;line-height:13.4px;font-size:8.40px;color:#717171;font-family:'Liberation Sans', sans-serif;font-weight:normal;white-space:pre;transform-origin:0 50%;transform:scaleX(0.8877);">0.0000 mm</span>
<div style="position:absolute;left:0;top:0;width:329px;height:648px;overflow:hidden;"><span style="position:absolute;left:231.8px;top:119.65px;height:13.4px;line-height:13.4px;font-size:8.40px;color:#717171;font-family:'Liberation Sans', sans-serif;font-weight:normal;white-space:pre;transform-origin:0 50%;transform:scaleX(0.9539);">Dynamic rule (touch point ed</span></div>
<span style="position:absolute;left:20.0px;top:137.20px;height:13.4px;line-height:13.4px;font-size:8.40px;color:#717171;font-family:'Liberation Sans', sans-serif;font-weight:normal;white-space:pre;transform-origin:0 50%;transform:scaleX(0.6849);">3</span>
<span style="position:absolute;left:85.9px;top:137.20px;height:13.4px;line-height:13.4px;font-size:8.40px;color:#717171;font-family:'Liberation Sans', sans-serif;font-weight:normal;white-space:pre;transform-origin:0 50%;transform:scaleX(0.8807);">D2_line_contact</span>
<span style="position:absolute;left:145.8px;top:137.20px;height:13.4px;line-height:13.4px;font-size:8.40px;color:#717171;font-family:'Liberation Sans', sans-serif;font-weight:normal;white-space:pre;transform-origin:0 50%;transform:scaleX(0.8487);">X'</span>
<span style="position:absolute;left:186.0px;top:137.20px;height:13.4px;line-height:13.4px;font-size:8.40px;color:#717171;font-family:'Liberation Sans', sans-serif;font-weight:normal;white-space:pre;transform-origin:0 50%;transform:scaleX(0.8996);">-0.0000 mm</span>
<div style="position:absolute;left:0;top:0;width:329px;height:648px;overflow:hidden;"><span style="position:absolute;left:231.8px;top:137.20px;height:13.4px;line-height:13.4px;font-size:8.40px;color:#717171;font-family:'Liberation Sans', sans-serif;font-weight:normal;white-space:pre;transform-origin:0 50%;transform:scaleX(0.9539);">Dynamic rule (touch point ed</span></div>
<span style="position:absolute;left:20.0px;top:154.75px;height:13.4px;line-height:13.4px;font-size:8.40px;color:#717171;font-family:'Liberation Sans', sans-serif;font-weight:normal;white-space:pre;transform-origin:0 50%;transform:scaleX(0.6849);">4</span>
<span style="position:absolute;left:85.9px;top:154.75px;height:13.4px;line-height:13.4px;font-size:8.40px;color:#717171;font-family:'Liberation Sans', sans-serif;font-weight:normal;white-space:pre;transform-origin:0 50%;transform:scaleX(0.8791);">E1_line_contact</span>
<span style="position:absolute;left:145.8px;top:154.75px;height:13.4px;line-height:13.4px;font-size:8.40px;color:#717171;font-family:'Liberation Sans', sans-serif;font-weight:normal;white-space:pre;transform-origin:0 50%;transform:scaleX(0.8487);">Y'</span>
<span style="position:absolute;left:189.0px;top:154.75px;height:13.4px;line-height:13.4px;font-size:8.40px;color:#717171;font-family:'Liberation Sans', sans-serif;font-weight:normal;white-space:pre;transform-origin:0 50%;transform:scaleX(0.8877);">0.0000 mm</span>
<div style="position:absolute;left:0;top:0;width:329px;height:648px;overflow:hidden;"><span style="position:absolute;left:231.8px;top:154.75px;height:13.4px;line-height:13.4px;font-size:8.40px;color:#717171;font-family:'Liberation Sans', sans-serif;font-weight:normal;white-space:pre;transform-origin:0 50%;transform:scaleX(0.9539);">Dynamic rule (touch point ed</span></div>
<span style="position:absolute;left:20.0px;top:172.30px;height:13.4px;line-height:13.4px;font-size:8.40px;color:#717171;font-family:'Liberation Sans', sans-serif;font-weight:normal;white-space:pre;transform-origin:0 50%;transform:scaleX(0.6849);">5</span>
<span style="position:absolute;left:85.9px;top:172.30px;height:13.4px;line-height:13.4px;font-size:8.40px;color:#717171;font-family:'Liberation Sans', sans-serif;font-weight:normal;white-space:pre;transform-origin:0 50%;transform:scaleX(0.8791);">E2_line_contact</span>
<span style="position:absolute;left:145.8px;top:172.30px;height:13.4px;line-height:13.4px;font-size:8.40px;color:#717171;font-family:'Liberation Sans', sans-serif;font-weight:normal;white-space:pre;transform-origin:0 50%;transform:scaleX(0.8487);">Y'</span>
<span style="position:absolute;left:186.0px;top:172.30px;height:13.4px;line-height:13.4px;font-size:8.40px;color:#717171;font-family:'Liberation Sans', sans-serif;font-weight:normal;white-space:pre;transform-origin:0 50%;transform:scaleX(0.8996);">-0.0000 mm</span>
<div style="position:absolute;left:0;top:0;width:329px;height:648px;overflow:hidden;"><span style="position:absolute;left:231.8px;top:172.30px;height:13.4px;line-height:13.4px;font-size:8.40px;color:#717171;font-family:'Liberation Sans', sans-serif;font-weight:normal;white-space:pre;transform-origin:0 50%;transform:scaleX(0.9539);">Dynamic rule (touch point ed</span></div>
<span style="position:absolute;left:20.0px;top:189.85px;height:13.4px;line-height:13.4px;font-size:8.40px;color:#717171;font-family:'Liberation Sans', sans-serif;font-weight:normal;white-space:pre;transform-origin:0 50%;transform:scaleX(0.6849);">6</span>
<span style="position:absolute;left:85.9px;top:189.85px;height:13.4px;line-height:13.4px;font-size:8.40px;color:#717171;font-family:'Liberation Sans', sans-serif;font-weight:normal;white-space:pre;transform-origin:0 50%;transform:scaleX(0.7054);">F1</span>
<span style="position:absolute;left:145.8px;top:189.85px;height:13.4px;line-height:13.4px;font-size:8.40px;color:#717171;font-family:'Liberation Sans', sans-serif;font-weight:normal;white-space:pre;transform-origin:0 50%;transform:scaleX(0.9079);">Z'</span>
<span style="position:absolute;left:186.0px;top:189.85px;height:13.4px;line-height:13.4px;font-size:8.40px;color:#717171;font-family:'Liberation Sans', sans-serif;font-weight:normal;white-space:pre;transform-origin:0 50%;transform:scaleX(0.8996);">-0.0000 mm</span>
<div style="position:absolute;left:0;top:0;width:329px;height:648px;overflow:hidden;"><span style="position:absolute;left:231.8px;top:189.85px;height:13.4px;line-height:13.4px;font-size:8.40px;color:#717171;font-family:'Liberation Sans', sans-serif;font-weight:normal;white-space:pre;transform-origin:0 50%;transform:scaleX(0.9309);">Dynamic rule</span></div>
<span style="position:absolute;left:17.0px;top:269.40px;height:13.4px;line-height:13.4px;font-size:8.40px;color:#717171;font-family:'Liberation Sans', sans-serif;font-weight:normal;white-space:pre;transform-origin:0 50%;transform:scaleX(0.8842);">Result</span>
<span style="position:absolute;left:17.0px;top:286.00px;height:13.4px;line-height:13.4px;font-size:8.40px;color:#717171;font-family:'Liberation Sans', sans-serif;font-weight:normal;white-space:pre;transform-origin:0 50%;transform:scaleX(0.9221);">Deviation</span>
<span style="position:absolute;left:292.4px;top:286.00px;height:13.4px;line-height:13.4px;font-size:8.40px;color:#717171;font-family:'Liberation Sans', sans-serif;font-weight:normal;white-space:pre;transform-origin:0 50%;transform:scaleX(0.8972);">0.0000 mm</span>
<span style="position:absolute;left:17.0px;top:303.60px;height:13.4px;line-height:13.4px;font-size:8.40px;color:#717171;font-family:'Liberation Sans', sans-serif;font-weight:normal;white-space:pre;transform-origin:0 50%;transform:scaleX(0.8971);">Expert parameters</span>
<span style="position:absolute;left:17.0px;top:322.20px;height:13.4px;line-height:13.4px;font-size:8.40px;color:#717171;font-family:'Liberation Sans', sans-serif;font-weight:normal;white-space:pre;transform-origin:0 50%;transform:scaleX(0.9498);">Alignment hierarchy</span>
<span style="position:absolute;left:17.0px;top:342.20px;height:13.4px;line-height:13.4px;font-size:8.40px;color:#717171;font-family:'Liberation Sans', sans-serif;font-weight:normal;white-space:pre;transform-origin:0 50%;transform:scaleX(0.8759);">Based on</span>
<span style="position:absolute;left:71.8px;top:342.20px;height:13.4px;line-height:13.4px;font-size:8.40px;color:#717171;font-family:'Liberation Sans', sans-serif;font-weight:normal;white-space:pre;transform-origin:0 50%;transform:scaleX(0.8900);">Best-Fit By Reference Points</span>
<span style="position:absolute;left:17.0px;top:362.20px;height:13.4px;line-height:13.4px;font-size:8.40px;color:#717171;font-family:'Liberation Sans', sans-serif;font-weight:normal;white-space:pre;transform-origin:0 50%;transform:scaleX(0.9182);">Warning: Constraint "General" is active for coordinate system "D|E|F".</span>
<span style="position:absolute;left:27.5px;top:387.10px;height:13.4px;line-height:13.4px;font-size:8.40px;color:#717171;font-family:'Liberation Sans', sans-serif;font-weight:normal;white-space:pre;transform-origin:0 50%;transform:scaleX(0.9130);">Edit Global Constraints</span>
<span style="position:absolute;left:257.3px;top:387.40px;height:13.4px;line-height:13.4px;font-size:8.40px;color:#717171;font-family:'Liberation Sans', sans-serif;font-weight:normal;white-space:pre;transform-origin:0 50%;transform:scaleX(0.8588);">OK</span>
<span style="position:absolute;left:296.4px;top:387.40px;height:13.4px;line-height:13.4px;font-size:8.40px;color:#717171;font-family:'Liberation Sans', sans-serif;font-weight:normal;white-space:pre;transform-origin:0 50%;transform:scaleX(0.9011);">Cancel</span>
<span style="position:absolute;left:369.3px;top:360.10px;height:13.8px;line-height:13.8px;font-size:8.60px;color:#1f1f1f;font-family:'Liberation Sans', sans-serif;font-weight:normal;white-space:pre;transform-origin:0 50%;transform:scaleX(0.8897);">Edit Global Constraints</span>
<span style="position:absolute;left:503.0px;top:358.60px;height:16.0px;line-height:16.0px;font-size:10.00px;color:#333;font-family:'Liberation Sans', sans-serif;font-weight:normal;white-space:pre;transform-origin:0 50%;transform:scaleX(0.7551);">?</span>
<span style="position:absolute;left:357.2px;top:384.60px;height:13.8px;line-height:13.8px;font-size:8.60px;color:#1f1f1f;font-family:'Liberation Sans', sans-serif;font-weight:normal;white-space:pre;transform-origin:0 50%;transform:scaleX(0.9139);">Constraint</span>
<span style="position:absolute;left:483.0px;top:384.60px;height:13.8px;line-height:13.8px;font-size:8.60px;color:#1f1f1f;font-family:'Liberation Sans', sans-serif;font-weight:normal;white-space:pre;transform-origin:0 50%;transform:scaleX(0.8666);">General</span>
<span style="position:absolute;left:357.2px;top:403.90px;height:13.8px;line-height:13.8px;font-size:8.60px;color:#1f1f1f;font-family:'Liberation Sans', sans-serif;font-weight:normal;white-space:pre;transform-origin:0 50%;transform:scaleX(0.8964);">Rotation</span>
<span style="position:absolute;left:372.0px;top:421.90px;height:13.8px;line-height:13.8px;font-size:8.60px;color:#1f1f1f;font-family:'Liberation Sans', sans-serif;font-weight:normal;white-space:pre;transform-origin:0 50%;transform:scaleX(0.9243);">Allow X rotation</span>
<span style="position:absolute;left:372.0px;top:439.50px;height:13.8px;line-height:13.8px;font-size:8.60px;color:#1f1f1f;font-family:'Liberation Sans', sans-serif;font-weight:normal;white-space:pre;transform-origin:0 50%;transform:scaleX(0.9292);">Allow Y rotation</span>
<span style="position:absolute;left:372.0px;top:457.20px;height:13.8px;line-height:13.8px;font-size:8.60px;color:#1f1f1f;font-family:'Liberation Sans', sans-serif;font-weight:normal;white-space:pre;transform-origin:0 50%;transform:scaleX(0.9319);">Allow Z rotation</span>
<span style="position:absolute;left:372.0px;top:491.50px;height:13.8px;line-height:13.8px;font-size:8.60px;color:#1f1f1f;font-family:'Liberation Sans', sans-serif;font-weight:normal;white-space:pre;transform-origin:0 50%;transform:scaleX(0.9109);">Allow X translation</span>
<span style="position:absolute;left:372.0px;top:509.20px;height:13.8px;line-height:13.8px;font-size:8.60px;color:#1f1f1f;font-family:'Liberation Sans', sans-serif;font-weight:normal;white-space:pre;transform-origin:0 50%;transform:scaleX(0.9149);">Allow Y translation</span>
<span style="position:absolute;left:372.0px;top:526.90px;height:13.8px;line-height:13.8px;font-size:8.60px;color:#1f1f1f;font-family:'Liberation Sans', sans-serif;font-weight:normal;white-space:pre;transform-origin:0 50%;transform:scaleX(0.9171);">Allow Z translation</span>
<span style="position:absolute;left:357.2px;top:473.50px;height:13.8px;line-height:13.8px;font-size:8.60px;color:#1f1f1f;font-family:'Liberation Sans', sans-serif;font-weight:normal;white-space:pre;transform-origin:0 50%;transform:scaleX(0.8720);">Translation</span>
<span style="position:absolute;left:357.2px;top:544.10px;height:13.8px;line-height:13.8px;font-size:8.60px;color:#1f1f1f;font-family:'Liberation Sans', sans-serif;font-weight:normal;white-space:pre;transform-origin:0 50%;transform:scaleX(0.8932);">Coordinate system</span>
<span style="position:absolute;left:357.2px;top:564.40px;height:13.8px;line-height:13.8px;font-size:8.60px;color:#1f1f1f;font-family:'Liberation Sans', sans-serif;font-weight:normal;white-space:pre;transform-origin:0 50%;transform:scaleX(0.8932);">Coordinate system</span>
<span style="position:absolute;left:462.0px;top:564.40px;height:13.8px;line-height:13.8px;font-size:8.60px;color:#1f1f1f;font-family:'Liberation Sans', sans-serif;font-weight:normal;white-space:pre;transform-origin:0 50%;transform:scaleX(0.8081);">D|E|F</span>
<span style="position:absolute;left:474.0px;top:600.10px;height:13.8px;line-height:13.8px;font-size:8.60px;color:#1f1f1f;font-family:'Liberation Sans', sans-serif;font-weight:normal;white-space:pre;transform-origin:0 50%;transform:scaleX(0.8453);">OK</span>
<span style="position:absolute;left:508.8px;top:600.10px;height:13.8px;line-height:13.8px;font-size:8.60px;color:#1f1f1f;font-family:'Liberation Sans', sans-serif;font-weight:normal;white-space:pre;transform-origin:0 50%;transform:scaleX(0.8817);">Cancel</span>
<span style="position:absolute;left:813.0px;top:5.75px;height:13.1px;line-height:13.1px;font-size:8.20px;color:#222;font-family:'Liberation Sans', sans-serif;font-weight:normal;white-space:pre;transform-origin:0 50%;transform:scaleX(0.9101);">"D|E|F" is used for viewing.</span>
<span style="position:absolute;left:908.6px;top:5.75px;height:13.1px;line-height:13.1px;font-size:8.20px;color:#222;font-family:'Liberation Sans', sans-serif;font-weight:normal;white-space:pre;transform-origin:0 50%;transform:scaleX(0.9337);text-decoration:underline;">Click here to deactivate.</span>
<span style="position:absolute;left:704.7px;top:619.05px;height:13.1px;line-height:13.1px;font-size:8.20px;color:#333;font-family:'Liberation Sans', sans-serif;font-weight:normal;white-space:pre;transform-origin:0 50%;transform:scaleX(0.9236);">Preview</span>
<span style="position:absolute;left:845.4px;top:48.70px;height:11.4px;line-height:11.4px;font-size:7.10px;color:#111;font-family:'DejaVu Sans', 'Liberation Sans', sans-serif;font-weight:bold;white-space:pre;transform-origin:0 50%;transform:scaleX(1.0888);">D2_line_contact</span>
<span style="position:absolute;left:843.8px;top:82.80px;height:11.4px;line-height:11.4px;font-size:7.10px;color:#111;font-family:'DejaVu Sans', 'Liberation Sans', sans-serif;font-weight:bold;white-space:pre;transform-origin:0 50%;transform:scaleX(1.0984);">D1_line_contact</span>
<span style="position:absolute;left:944.6px;top:199.80px;height:11.4px;line-height:11.4px;font-size:7.10px;color:#111;font-family:'DejaVu Sans', 'Liberation Sans', sans-serif;font-weight:bold;white-space:pre;transform-origin:0 50%;transform:scaleX(1.1126);">F1</span>
<span style="position:absolute;left:442.5px;top:180.70px;height:11.4px;line-height:11.4px;font-size:7.10px;color:#111;font-family:'DejaVu Sans', 'Liberation Sans', sans-serif;font-weight:bold;white-space:pre;transform-origin:0 50%;transform:scaleX(1.0472);">E3-GB</span>
<span style="position:absolute;left:384.6px;top:245.25px;height:11.4px;line-height:11.4px;font-size:7.10px;color:#111;font-family:'DejaVu Sans', 'Liberation Sans', sans-serif;font-weight:bold;white-space:pre;transform-origin:0 50%;transform:scaleX(1.0616);">E3</span>
<span style="position:absolute;left:455.0px;top:306.65px;height:11.4px;line-height:11.4px;font-size:7.10px;color:#111;font-family:'DejaVu Sans', 'Liberation Sans', sans-serif;font-weight:bold;white-space:pre;transform-origin:0 50%;transform:scaleX(1.0604);">E3-GA</span>
<span style="position:absolute;left:692.5px;top:391.80px;height:11.4px;line-height:11.4px;font-size:7.10px;color:#111;font-family:'DejaVu Sans', 'Liberation Sans', sans-serif;font-weight:bold;white-space:pre;transform-origin:0 50%;transform:scaleX(1.0973);">E2_line_contact</span>
<span style="position:absolute;left:692.5px;top:426.10px;height:11.4px;line-height:11.4px;font-size:7.10px;color:#111;font-family:'DejaVu Sans', 'Liberation Sans', sans-serif;font-weight:bold;white-space:pre;transform-origin:0 50%;transform:scaleX(1.0973);">E1_line_contact</span>
<span style="position:absolute;left:765.5px;top:485.70px;height:11.4px;line-height:11.4px;font-size:7.10px;color:#111;font-family:'DejaVu Sans', 'Liberation Sans', sans-serif;font-weight:bold;white-space:pre;transform-origin:0 50%;transform:scaleX(1.1798);">D|E|F</span>
<span style="position:absolute;left:5.4px;top:601.45px;height:8.3px;line-height:8.3px;font-size:5.20px;color:#222;font-family:'Liberation Sans', sans-serif;font-weight:normal;white-space:pre;transform-origin:0 50%;transform:scaleX(1.0378);">X</span>
<span style="position:absolute;left:36.4px;top:598.45px;height:8.3px;line-height:8.3px;font-size:5.20px;color:#222;font-family:'Liberation Sans', sans-serif;font-weight:normal;white-space:pre;transform-origin:0 50%;transform:scaleX(1.0089);">Z</span>
<span style="position:absolute;left:36.6px;top:637.05px;height:8.3px;line-height:8.3px;font-size:5.20px;color:#222;font-family:'Liberation Sans', sans-serif;font-weight:normal;white-space:pre;transform-origin:0 50%;transform:scaleX(0.9802);">Y</span>
</body></html>
